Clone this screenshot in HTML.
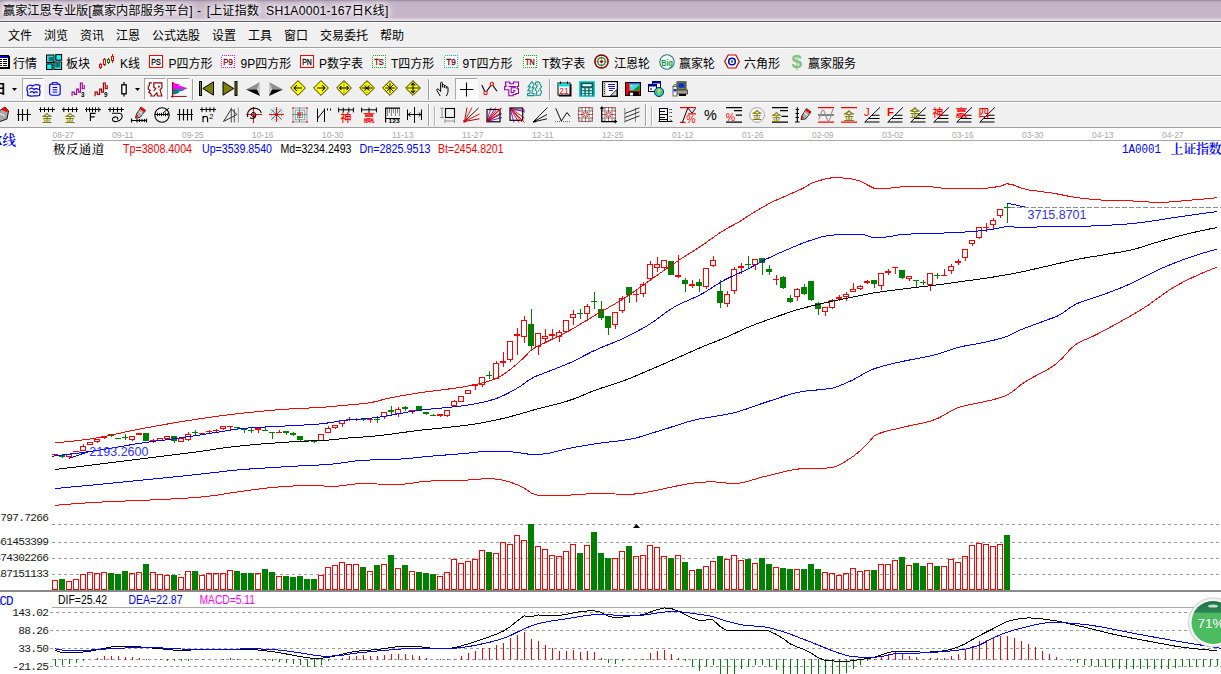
<!DOCTYPE html>
<html lang="zh-CN"><head><meta charset="utf-8"><title>赢家江恩专业版</title>
<style>
html,body{margin:0;padding:0}
body{width:1221px;height:674px;overflow:hidden;position:relative;background:#fff;
 font:12px/14px "Liberation Sans","Noto Sans CJK SC",sans-serif;color:#000}
.abs{position:absolute}
#title{left:0;top:0;width:1221px;height:21px;
 background:linear-gradient(to bottom,#8f8093 0,#b3a3b7 1px,#c4b3c7 3px,#c7b6ca 10px,#c6b5c9 17px,#d8cddb 19px,#efeaf0 21px)}
#title span{position:absolute;left:3px;top:3px;height:16px;line-height:16px;white-space:pre;font-size:12.2px;
 text-shadow:0 0 5px #fff,0 0 7px #fff,0 0 9px #fff,0 0 12px #f4eef5}
#tline{left:0;top:21px;width:1221px;height:1px;background:#5e5963}
#menu{left:0;top:22px;width:1221px;height:25px;background:#f0f0f0;border-top:1px solid #fff;box-sizing:border-box}
#menu span{position:absolute;top:6px;line-height:14px;white-space:nowrap}
.tb{left:0;width:1221px;background:#f0f0f0}
.sep{left:0;width:1221px;height:1px;background:#a0a0a0}
.sepw{left:0;width:1221px;height:1px;background:#fff}
.t1{position:absolute;top:56.5px;line-height:14px;white-space:nowrap}
.vs{position:absolute;width:1px;background:#a0a0a0;border-right:1px solid #fff}
.pressed{position:absolute;background:#fafafa;border:1px solid #a8a8a8;border-right-color:#fff;border-bottom-color:#fff;box-sizing:border-box}
svg{position:absolute;overflow:visible}
text{white-space:pre}
</style></head><body>

<div id="title" class="abs"><span>赢家江恩专业版[赢家内部服务平台]<i style="font-style:normal;letter-spacing:1.1px"> - </i>[上证指数<i style="font-style:normal;letter-spacing:0.2px">  SH1A0001-167日K线]</i></span></div>
<div id="tline" class="abs"></div>
<div id="menu" class="abs">
<span style="left:8px">文件</span>
<span style="left:44px">浏览</span>
<span style="left:80px">资讯</span>
<span style="left:116px">江恩</span>
<span style="left:152px">公式选股</span>
<span style="left:212px">设置</span>
<span style="left:248px">工具</span>
<span style="left:284px">窗口</span>
<span style="left:320px">交易委托</span>
<span style="left:380px">帮助</span>
</div>
<div class="abs sep" style="top:47px"></div><div class="abs sepw" style="top:48px"></div>
<div class="abs tb" style="top:49px;height:26px"></div>
<div class="abs sep" style="top:75px"></div><div class="abs sepw" style="top:76px"></div>
<div class="abs tb" style="top:77px;height:25px"></div>
<div class="abs sep" style="top:101px"></div><div class="abs sepw" style="top:102px"></div>
<div class="abs tb" style="top:103px;height:24px"></div>
<div class="abs sep" style="top:127px"></div>
<span class="t1" style="left:13px">行情</span>
<span class="t1" style="left:66px">板块</span>
<span class="t1" style="left:120px">K线</span>
<span class="t1" style="left:168.5px">P四方形</span>
<span class="t1" style="left:240.5px">9P四方形</span>
<span class="t1" style="left:319px">P数字表</span>
<span class="t1" style="left:391px">T四方形</span>
<span class="t1" style="left:462.5px">9T四方形</span>
<span class="t1" style="left:542px">T数字表</span>
<span class="t1" style="left:614px">江恩轮</span>
<span class="t1" style="left:679px">赢家轮</span>
<span class="t1" style="left:744px">六角形</span>
<span class="t1" style="left:808px">赢家服务</span>
<svg style="left:-7px;top:55px" width="17" height="14" viewBox="0 0 17 14" shape-rendering="crispEdges"><rect x="0.5" y="0.5" width="15" height="12" fill="#fff" stroke="#000"/><rect x="1" y="1" width="14" height="2" fill="#0000c0"/><path d="M2 4.5H14M2 6.5H14M2 8.5H14M2 10.5H14" stroke="#000" fill="none"/><path d="M5.5 4V11M9.5 4V11" stroke="#fff" fill="none"/><rect x="16" y="1" width="1" height="13" fill="#000"/><rect x="1" y="13" width="16" height="1" fill="#000"/></svg>
<svg style="left:46px;top:54px" width="16" height="16" viewBox="0 0 16 16"><rect x="0.5" y="1" width="7.5" height="7.5" fill="#30d8d8" stroke="#000"/><rect x="2.7" y="3" width="4.6" height="4.3" fill="#007878"/><rect x="9.8" y="0.6" width="5.8" height="5.6" fill="#00ffff" stroke="#000" stroke-width="1.1"/><rect x="0.6" y="9.9" width="5.6" height="5.6" fill="#00ffff" stroke="#000" stroke-width="1.1"/><rect x="7.9" y="8" width="7.7" height="7.5" fill="#30d8d8" stroke="#000"/><rect x="9.2" y="8.9" width="4.8" height="4.4" fill="#007878"/></svg>
<svg style="left:98px;top:53px" width="17" height="17" viewBox="0 0 17 17" shape-rendering="crispEdges"><g fill="#fff" stroke="#ff0000"><path d="M2.5 10V16M6.5 5V13M14.5 1V10" /><rect x="1.5" y="11.5" width="2" height="3"/><rect x="5.5" y="6.5" width="2" height="5"/><rect x="13.5" y="3.5" width="2" height="4"/></g><g fill="#fff" stroke="#008000"><path d="M10.5 5V11"/><rect x="9.5" y="6.5" width="2" height="3"/></g></svg>
<svg style="left:149px;top:55px" width="14" height="13" viewBox="0 0 14 13"><rect x="0.5" y="0.5" width="13" height="12" fill="#fff" stroke="#ff0000" shape-rendering="crispEdges"/><text x="7" y="10" text-anchor="middle" font-size="8.3" font-family="Liberation Sans, sans-serif" fill="#000" stroke="#000" stroke-width="0.3" textLength="9.6" lengthAdjust="spacingAndGlyphs">PS</text></svg>
<svg style="left:221px;top:55px" width="14" height="13" viewBox="0 0 14 13"><rect x="0.5" y="0.5" width="13" height="12" fill="#fff" stroke="#ff00ff" stroke-dasharray="1 1" shape-rendering="crispEdges"/><text x="7" y="10" text-anchor="middle" font-size="8.3" font-family="Liberation Sans, sans-serif" fill="#800000" stroke="#800000" stroke-width="0.3" textLength="9.6" lengthAdjust="spacingAndGlyphs">P9</text></svg>
<svg style="left:300px;top:55px" width="14" height="13" viewBox="0 0 14 13"><rect x="0.5" y="0.5" width="13" height="12" fill="#fff" stroke="#ff0000" shape-rendering="crispEdges"/><text x="7" y="10" text-anchor="middle" font-size="8.3" font-family="Liberation Sans, sans-serif" fill="#000" stroke="#000" stroke-width="0.3" textLength="9.6" lengthAdjust="spacingAndGlyphs">PN</text></svg>
<svg style="left:372px;top:55px" width="14" height="13" viewBox="0 0 14 13"><rect x="0.5" y="0.5" width="13" height="12" fill="#fff" stroke="#00c000" stroke-dasharray="1 1" shape-rendering="crispEdges"/><text x="7" y="10" text-anchor="middle" font-size="8.3" font-family="Liberation Sans, sans-serif" fill="#800000" stroke="#800000" stroke-width="0.3" textLength="9.6" lengthAdjust="spacingAndGlyphs">TS</text></svg>
<svg style="left:443.5px;top:55px" width="14" height="13" viewBox="0 0 14 13"><rect x="0.5" y="0.5" width="13" height="12" fill="#fff" stroke="#00c8c8" stroke-dasharray="1 1" shape-rendering="crispEdges"/><text x="7" y="10" text-anchor="middle" font-size="8.3" font-family="Liberation Sans, sans-serif" fill="#800000" stroke="#800000" stroke-width="0.3" textLength="9.6" lengthAdjust="spacingAndGlyphs">T9</text></svg>
<svg style="left:523px;top:55px" width="14" height="13" viewBox="0 0 14 13"><rect x="0.5" y="0.5" width="13" height="12" fill="#fff" stroke="#00c000" stroke-dasharray="1 1" shape-rendering="crispEdges"/><text x="7" y="10" text-anchor="middle" font-size="8.3" font-family="Liberation Sans, sans-serif" fill="#800000" stroke="#800000" stroke-width="0.3" textLength="9.6" lengthAdjust="spacingAndGlyphs">TN</text></svg>
<svg style="left:594px;top:54px" width="15" height="15" viewBox="0 0 15 15"><circle cx="7.5" cy="7.5" r="6.6" fill="#f0f0f0" stroke="#800000" stroke-width="1.5"/><circle cx="7.5" cy="7.5" r="3.8" fill="#fff" stroke="#2f8f2f" stroke-width="1.4"/><circle cx="7.5" cy="7.5" r="1.5" fill="#c00000"/><path d="M7.5 0V15M0 7.5H15" stroke="#800000" stroke-width="0.5" opacity="0.6"/></svg>
<svg style="left:659px;top:54px" width="16" height="16" viewBox="0 0 16 16"><circle cx="8" cy="8" r="7.2" fill="#f4f8f8" stroke="#2a7a8a" stroke-width="1.1"/><text x="8" y="11.5" text-anchor="middle" font-size="9.5" font-weight="bold" font-family="Liberation Sans, sans-serif" fill="#0a9a40" textLength="11.5" lengthAdjust="spacingAndGlyphs">Big</text></svg>
<svg style="left:724px;top:54px" width="16" height="15" viewBox="0 0 16 15"><path d="M0.7 7.5L4.2 1H11.8L15.3 7.5L11.8 14H4.2Z" fill="#fff" stroke="#c00000" stroke-width="1.2"/><circle cx="8" cy="7.5" r="3.3" fill="#fff" stroke="#0000c0" stroke-width="1.5"/><circle cx="8" cy="7.5" r="1.3" fill="#00a000"/></svg>
<span style="position:absolute;left:791.5px;top:51px;font:bold 19px/22px 'Liberation Sans',sans-serif;color:#7cc47e">$</span>
<span style="position:absolute;left:-7px;top:81px;font:bold 13px/16px 'Liberation Sans','Noto Sans CJK SC',sans-serif;color:#000">日</span>
<svg style="left:12px;top:88px" width="5" height="3" viewBox="0 0 5 3"><path d="M0 0H5L2.5 3Z" fill="#000"/></svg>
<div class="pressed" style="left:21.5px;top:78px;width:22px;height:22px"></div>
<div class="pressed" style="left:144px;top:78px;width:22px;height:22px"></div>
<div class="pressed" style="left:167px;top:78px;width:23px;height:22px"></div>
<div class="pressed" style="left:455px;top:78px;width:22.5px;height:22px"></div>
<svg style="left:25.5px;top:82.5px" width="15" height="14" viewBox="0 0 15 14"><path d="M1 4.5C2 1.5 5 2 6.5 3C9 1 12 1.5 14 2.5L13.5 6C14.5 8 14 10.5 13.5 12.5C11 13.5 8.5 12.5 7 13C5 13.5 3 13 1.5 12C2.5 10 1.5 8.5 1 7Z M3 6.5C4.5 4.5 7 5 8 6.5C9.5 5 11.5 5.5 12.5 7 M4 9.5C5.5 8 7 8.5 8 10C9 8.5 10.5 8.5 11.5 10" fill="none" stroke="#0000ff" stroke-width="1.2"/></svg>
<svg style="left:48.5px;top:81.5px" width="12" height="14" viewBox="0 0 12 14"><rect x="0.6" y="1.8" width="10.6" height="11.4" rx="2.2" fill="none" stroke="#0000ff" stroke-width="1.15"/><rect x="3.6" y="0.5" width="4.6" height="1.8" fill="#f0f0f0" stroke="#0000ff" stroke-width="0.9"/><path d="M3.6 5.5H8.2M3.6 7.8H8.2M3.6 10.1H8.2" stroke="#0000ff" stroke-width="1"/></svg>
<svg style="left:70.5px;top:81.5px" width="15" height="15" viewBox="0 0 15 15"><path d="M1.1 14.2V10.1H3.4V12.4H5.65V7.1H7.5V10.1H9.4V1H11.3V6.7H13.2V3" fill="none" stroke="#a000a0" stroke-width="1.15"/><text x="10" y="15" font-size="6.3" font-weight="bold" font-family="Liberation Sans, sans-serif" fill="#000">3</text></svg>
<svg style="left:94px;top:81.5px" width="15" height="15" viewBox="0 0 15 15"><path d="M1.1 14.2V10.1H3.4V12.4H5.65V7.1H7.5V10.1H9.4V1H11.3V6.7H13.2V3" fill="none" stroke="#a00000" stroke-width="1.15"/><text x="10" y="15" font-size="6.3" font-weight="bold" font-family="Liberation Sans, sans-serif" fill="#000">9</text></svg>
<svg style="left:120.5px;top:81.5px" width="6" height="15" viewBox="0 0 6 15"><path d="M3 0V14.5" stroke="#000" stroke-width="1.2"/><rect x="0.8" y="2.8" width="4.4" height="9" fill="#fff" stroke="#000" stroke-width="1.3"/></svg>
<svg style="left:135px;top:88px" width="5" height="3" viewBox="0 0 5 3"><path d="M0 0H5L2.5 3Z" fill="#000"/></svg>
<svg style="left:148px;top:82px" width="15" height="15" viewBox="0 0 15 15"><path d="M3.9 0.9H1.4V3.4L0.3 4.6V7.2L2.3 8.4L0.8 10.3L3 11.8V14H6.4L7 12.8L8.9 10.9L9.5 14H13.9L12 7.8L13.9 5.9V0.9H5.8V5.3L7.7 6.5L5.8 9" fill="none" stroke="#900000" stroke-width="1.15"/><rect x="10" y="3.8" width="1.7" height="1.7" fill="#900000"/></svg>
<svg style="left:171px;top:81px" width="16" height="17" viewBox="0 0 16 17"><path d="M2.1 1.1L3.6 2.3L8.9 3.4L7.4 4.5L12.7 6L15.7 7V7.9H2.1Z" fill="#ff00ff"/><path d="M2.1 7.9L14.2 8.3L12.7 9.4L8.2 10.6L7.4 12.1L4.4 13.2L2.1 13.6Z" fill="#008080"/><rect x="1" y="1" width="1.15" height="15.6" fill="#b00000"/><rect x="0" y="14.9" width="15.7" height="1" fill="#b00000"/></svg>
<div class="vs" style="left:192px;top:79px;height:21px"></div>
<svg style="left:199px;top:81px" width="16" height="15" viewBox="0 0 16 15"><rect x="0.5" y="0.5" width="2" height="14" fill="#808000" stroke="#000"/><path d="M14.5 0.8V14.2L3.8 7.5Z" fill="#808000" stroke="#000" stroke-width="1"/></svg>
<svg style="left:221.5px;top:81px" width="16" height="15" viewBox="0 0 16 15"><rect x="13" y="0.5" width="2" height="14" fill="#808000" stroke="#000"/><path d="M1 0.8V14.2L11.7 7.5Z" fill="#808000" stroke="#000" stroke-width="1"/></svg>
<svg style="left:246px;top:81.5px" width="15" height="15" viewBox="0 0 15 15"><path d="M14 0L0 7.5L11 7.5Z" fill="#909090"/><path d="M14 0L11 7.5L14 14Z" fill="#c8c8c8"/><path d="M0 7.5L14 14L11 7.5Z" fill="#000"/></svg>
<svg style="left:269px;top:81.5px" width="15" height="15" viewBox="0 0 15 15"><path d="M0 0L14 7.5L3 7.5Z" fill="#909090"/><path d="M0 0L3 7.5L0 14Z" fill="#c8c8c8"/><path d="M14 7.5L0 14L3 7.5Z" fill="#000"/></svg>
<svg style="left:290.3px;top:80.2px" width="16" height="16" viewBox="0 0 16 16"><path d="M8 0.6L15.4 8L8 15.4L0.6 8Z" fill="#ffff00" stroke="#1c1c00" stroke-width="0.9"/><path d="M4 8H12M7 5L4 8L7 11" stroke="#000" stroke-width="1.05" fill="none"/></svg>
<svg style="left:313.3px;top:80.2px" width="16" height="16" viewBox="0 0 16 16"><path d="M8 0.6L15.4 8L8 15.4L0.6 8Z" fill="#ffff00" stroke="#1c1c00" stroke-width="0.9"/><path d="M4 8H12M9 5L12 8L9 11" stroke="#000" stroke-width="1.05" fill="none"/></svg>
<svg style="left:336.3px;top:80.2px" width="16" height="16" viewBox="0 0 16 16"><path d="M8 0.6L15.4 8L8 15.4L0.6 8Z" fill="#ffff00" stroke="#1c1c00" stroke-width="0.9"/><path d="M3.5 8H12.5M5.5 6L3.5 8L5.5 10M10.5 6L12.5 8L10.5 10" stroke="#000" stroke-width="1.05" fill="none"/><path d="M8 2V14" stroke="#000" stroke-width="0.6" stroke-dasharray="1.5 1"/></svg>
<svg style="left:359.3px;top:80.2px" width="16" height="16" viewBox="0 0 16 16"><path d="M8 0.6L15.4 8L8 15.4L0.6 8Z" fill="#ffff00" stroke="#1c1c00" stroke-width="0.9"/><path d="M2.5 8H13.5M5.5 5.5L8 8L5.5 10.5M10.5 5.5L8 8L10.5 10.5" stroke="#000" stroke-width="1.05" fill="none"/><path d="M8 2V14" stroke="#666600" stroke-width="0.6" stroke-dasharray="1 1.5"/></svg>
<svg style="left:382.3px;top:80.2px" width="16" height="16" viewBox="0 0 16 16"><path d="M8 0.6L15.4 8L8 15.4L0.6 8Z" fill="#ffff00" stroke="#1c1c00" stroke-width="0.9"/><path d="M3 8H13M8 3V13M4.5 4.5L11.5 11.5M11.5 4.5L4.5 11.5" stroke="#000" stroke-width="0.9" fill="none"/></svg>
<svg style="left:405.3px;top:80.2px" width="16" height="16" viewBox="0 0 16 16"><path d="M8 0.6L15.4 8L8 15.4L0.6 8Z" fill="#ffff00" stroke="#1c1c00" stroke-width="0.9"/><path d="M8 3V13M5.8 5.5L8 3L10.2 5.5M5.8 10.5L8 13L10.2 10.5" stroke="#000" stroke-width="1.05" fill="none"/><path d="M2 8H14" stroke="#000" stroke-width="0.8"/></svg>
<div class="vs" style="left:428px;top:79px;height:21px"></div>
<svg style="left:436px;top:81px" width="13" height="16" viewBox="0 0 13 16"><path d="M4.2 15L1 9.6C0.2 8.2 1.6 7.2 2.7 8.4L4.6 10.6V2.2C4.6 0.8 6.4 0.8 6.4 2.2V6.5M6.4 4.3C6.6 3.2 8.2 3.3 8.3 4.5V7M8.3 5.2C8.6 4.2 10.1 4.4 10.2 5.6V7.6M10.2 6.3C10.6 5.5 12 5.7 12 7V10.3C12 12.3 11 13.6 10.3 15" fill="none" stroke="#000" stroke-width="1"/></svg>
<svg style="left:460px;top:82px" width="14" height="15" viewBox="0 0 14 15"><path d="M6.5 0.5V14.5M0 7.5H13.5" stroke="#000" stroke-width="1.1"/></svg>
<svg style="left:480.5px;top:81px" width="17" height="15" viewBox="0 0 17 15"><path d="M0.8 4L4.5 12L10.8 3L16 10.3" fill="none" stroke="#000" stroke-width="1.1"/><circle cx="4.5" cy="12" r="1.7" fill="#fff" stroke="#ff0000" stroke-width="1.1"/><circle cx="10.8" cy="3" r="1.7" fill="#fff" stroke="#ff0000" stroke-width="1.1"/></svg>
<svg style="left:504px;top:81px" width="15" height="15" viewBox="0 0 15 15"><path d="M1.5 1H5.8V2.8H9.5V1H14.5V5.5H13.2V7.8H14.5V12.5H12V13.5H9.2V14.7H4.8V8.8H0.6V5.5H2V4H1.5Z M4.5 5.5H11.3V6.8H7.2V11.5H9.8V9.5H11.5" fill="none" stroke="#9000a8" stroke-width="1.05"/></svg>
<svg style="left:527px;top:81px" width="15" height="15" viewBox="0 0 15 15"><path d="M4.8 0.8L1.2 5.8H3.2L0.8 9.8H3V12.5H0.6V14.6H7V12.5H5.2V9.5L7 6.8H5L7.2 3.2Z M8.5 1.5C10.5 0.3 13.3 1 13 3.2L14.6 5.8L12.8 7.8L14.6 10.8L13.2 14.3H8.8L10 11L8.2 8.5L10.2 5.5L8.6 3.5Z M10.8 3.2V4.2M11.5 9V10.5" fill="none" stroke="#109090" stroke-width="1.05"/></svg>
<div class="vs" style="left:549px;top:79px;height:21px"></div>
<svg style="left:557px;top:81px" width="15" height="16" viewBox="0 0 15 16"><rect x="2" y="3" width="12.5" height="12.5" fill="#000"/><rect x="1" y="2" width="12" height="12" fill="#fff" stroke="#000"/><rect x="1.5" y="2.5" width="11" height="3" fill="#00e0e0"/><path d="M3.5 0.5V3M10.5 0.5V3" stroke="#000"/><text x="7" y="13.4" text-anchor="middle" font-size="9.6" font-family="Liberation Sans, sans-serif" fill="#ff0000" textLength="9.6" lengthAdjust="spacingAndGlyphs">21</text></svg>
<svg style="left:579px;top:81px" width="16" height="16" viewBox="0 0 16 16"><rect x="0.8" y="0.8" width="14.4" height="14.4" fill="#007070" stroke="#00d0d0" stroke-width="1.3"/><rect x="3" y="2.8" width="10" height="3" fill="#e8ffff" stroke="#000" stroke-width="0.6"/><g fill="#f4ffff"><rect x="3" y="7.3" width="2.3" height="1.8"/><rect x="6.8" y="7.3" width="2.3" height="1.8"/><rect x="10.6" y="7.3" width="2.3" height="1.8"/><rect x="3" y="10.3" width="2.3" height="1.8"/><rect x="6.8" y="10.3" width="2.3" height="1.8"/><rect x="10.6" y="10.3" width="2.3" height="1.8"/><rect x="3" y="13" width="2.3" height="1.3"/><rect x="6.8" y="13" width="2.3" height="1.3"/><rect x="10.6" y="13" width="2.3" height="1.3"/></g></svg>
<svg style="left:602px;top:81px" width="16" height="16" viewBox="0 0 16 16"><rect x="0.6" y="0.6" width="14.8" height="14.8" fill="#fff" stroke="#000" stroke-width="1.2"/><rect x="1.2" y="1.2" width="2.4" height="13.6" fill="#c0c0c0"/><path d="M2.4 2V14" stroke="#303030" stroke-width="0.9" stroke-dasharray="1 1"/><path d="M5.5 3.2H12.5M5.5 5.4H12.5M6.5 7.6H12.5M6.5 9.8H11" stroke="#0000e0" stroke-width="0.9" shape-rendering="crispEdges"/><path d="M8.5 14.8L14.8 8.5V14.8Z" fill="#d0d0d0" stroke="#000" stroke-width="0.8"/></svg>
<svg style="left:625px;top:82px" width="16" height="14" viewBox="0 0 16 14"><rect x="0.5" y="0.5" width="15" height="13" fill="#ff0000" stroke="#000"/><rect x="4.5" y="1" width="10" height="7.5" fill="#40d8f0"/><path d="M8 8.5L14.5 3V8.5Z" fill="#00a000"/><rect x="4.5" y="1" width="10" height="1.2" fill="#2060ff"/><circle cx="6.6" cy="3.6" r="0.9" fill="#ffff60"/><rect x="3.5" y="9.5" width="10.5" height="4" fill="#000"/><rect x="5" y="10.7" width="3" height="2.8" fill="#fff"/></svg>
<svg style="left:648px;top:81px" width="16" height="16" viewBox="0 0 16 16"><rect x="4.5" y="0.5" width="8" height="7" fill="#fff" stroke="#000060"/><rect x="4.5" y="0.5" width="8" height="2" fill="#0000a0"/><rect x="0.5" y="3.5" width="8" height="7" fill="#fff" stroke="#000060"/><rect x="0.5" y="3.5" width="8" height="2" fill="#0000a0"/><rect x="2" y="7" width="2" height="2" fill="#808080"/><circle cx="11" cy="11" r="4.6" fill="#20c0d0" stroke="#003040" stroke-width="0.9"/><path d="M9 8.5L12 8L13.5 10L11.5 11.5L12 14L10 13L9.5 10.5Z" fill="#e0d020"/></svg>
<svg style="left:671.5px;top:81px" width="16" height="16" viewBox="0 0 16 16"><rect x="5" y="0.8" width="9" height="8.4" fill="#808040" stroke="#404020"/><rect x="6.5" y="2.2" width="6" height="4.5" fill="#0030e0"/><rect x="4" y="9" width="11.5" height="4" fill="#a0a090" stroke="#303030" stroke-width="0.8"/><rect x="7" y="13" width="7" height="2" fill="#000"/><rect x="1" y="5.5" width="4" height="9.5" fill="#f0f0f0" stroke="#606040" stroke-width="0.9"/><rect x="1.5" y="8" width="3" height="2.5" fill="#0030e0"/><path d="M0.8 5.5L3 3.2L5 5.5" fill="none" stroke="#404020" stroke-width="0.9"/></svg>
<svg style="left:-2px;top:107px" width="12" height="15" viewBox="0 0 12 15"><path d="M7 0L10.5 4L9 12L2 14.5L-2 12V6Z" fill="#a8a8a8" stroke="#000" stroke-width="0.9"/><path d="M3 2.5L7 0L10.5 4L8.5 5Z" fill="#ff0000"/><path d="M1 6L7 9" stroke="#fff" stroke-width="0.9"/></svg>
<svg style="left:17px;top:107px" width="14" height="15" viewBox="0 0 14 15"><path d="M1.5 2V14M5.5 2V14M10.5 2V14M0 7.5H13.8" stroke="#000" stroke-width="1.15" fill="none"/></svg>
<svg style="left:39px;top:107px" width="16" height="16" viewBox="0 0 16 16"><path d="M0 2.5H16M1.5 0.2999999999999998V5.1M5.5 0.2999999999999998V5.1M9.5 0.2999999999999998V5.1M13.5 0.2999999999999998V5.1" stroke="#000" stroke-width="1" fill="none"/><text x="2.8" y="14.6" font-size="10.5" font-family="Liberation Sans, Noto Sans CJK SC, sans-serif" fill="#808000" font-weight="500">金</text></svg>
<svg style="left:62px;top:107px" width="16" height="16" viewBox="0 0 16 16"><path d="M0 2.5H16M1.8 0.2999999999999998V5.1M6.5 0.2999999999999998V5.1M10.5 0.2999999999999998V5.1M14.5 0.2999999999999998V5.1" stroke="#000" stroke-width="1" fill="none"/><text x="2.8" y="14.6" font-size="10.5" font-family="Liberation Sans, Noto Sans CJK SC, sans-serif" fill="#808000" font-weight="500">金</text></svg>
<svg style="left:85px;top:107px" width="16" height="16" viewBox="0 0 16 16"><path d="M0 2.5H16M1.5 0.2999999999999998V5.1M4.5 0.2999999999999998V5.1M7.5 0.2999999999999998V5.1M10.5 0.2999999999999998V5.1M13.8 0.2999999999999998V5.1" stroke="#000" stroke-width="1" fill="none"/><path d="M5.4 14V6.3H10.6M5.4 9.8H9.6" stroke="#000" stroke-width="1.15" fill="none"/></svg>
<svg style="left:108px;top:107px" width="16" height="16" viewBox="0 0 16 16"><path d="M0 2.5H16M2 0.2999999999999998V5.1M5.5 0.2999999999999998V5.1M9.5 0.2999999999999998V5.1M13.5 0.2999999999999998V5.1" stroke="#000" stroke-width="1" fill="none"/><path d="M4 6.3H11C14 6.3 15 9 13.5 11.5C11.5 15 5.5 15.5 4.5 13C3.8 11 6.5 9.5 8.5 10C10 10.3 10.3 12 9 12.3" stroke="#000" stroke-width="1.1" fill="none"/></svg>
<svg style="left:131px;top:107px" width="16" height="16" viewBox="0 0 16 16"><g transform="translate(4.5 0)"><path d="M5.5 0L10 3.5L4.5 10.5L0 11L1 7Z" fill="#b0b0b0" stroke="#000" stroke-width="0.8"/><path d="M5.5 0L10 3.5L8.6 5.2L4.2 1.7Z" fill="#ff0000"/><path d="M0 11L1 7L2.8 8.8Z" fill="#ff0000"/><path d="M3 4L7 7.5" stroke="#fff" stroke-width="0.8"/></g><path d="M0 13.5H16M0.5 11.5V15.5M6 11.5V15.5M8.5 12V15M11 12V15M13.5 12V15M15.5 11.5V15.5" stroke="#000" stroke-width="1.1" fill="none"/></svg>
<svg style="left:154px;top:107px" width="16" height="16" viewBox="0 0 16 16"><circle cx="8" cy="8" r="7.2" fill="none" stroke="#000" stroke-width="1.1"/><path d="M0.8 7.5H15.2M3.5 5.8V9.2M5.5 6.3V8.7M7.5 5.8V9.2M9.5 6.3V8.7M11.5 5.8V9.2M13.5 6.3V8.7" stroke="#000" stroke-width="1" fill="none"/><path d="M9 6L15 1" stroke="#000" stroke-width="1"/></svg>
<svg style="left:177px;top:107px" width="16" height="15" viewBox="0 0 16 15"><path d="M2.5 2V13.5M6.5 2V13.5M10.5 2V13.5M14.5 2V13.5M0 7.5H16" stroke="#000" stroke-width="1.15" fill="none"/></svg>
<svg style="left:200px;top:107px" width="16" height="16" viewBox="0 0 16 16"><path d="M0 2.5H16M2 0.2999999999999998V5.1M6.3 0.2999999999999998V5.1M10 0.2999999999999998V5.1M13.8 0.2999999999999998V5.1" stroke="#000" stroke-width="1" fill="none"/><path d="M3 15.3V9M3 11C4 8.8 7.6 8.6 7.6 11.3V15.3" stroke="#000" stroke-width="1.15" fill="none"/><text x="9.3" y="12" font-size="7.5" font-family="Liberation Sans, sans-serif" fill="#000">2</text></svg>
<svg style="left:223px;top:107px" width="16" height="16" viewBox="0 0 16 16"><path d="M0.5 14.5L8.3 2L13.8 7.5Z" fill="none" stroke="#303030" stroke-width="1"/><path d="M8.3 0.5V15.5M11.3 2V15.5" stroke="#404040" stroke-width="0.9"/><path d="M15.3 0.5V15.5" stroke="#909090" stroke-width="1"/></svg>
<svg style="left:245.5px;top:107px" width="16" height="16" viewBox="0 0 16 16"><path d="M7.5 0V16M0 7.5H16" stroke="#ff0000" stroke-width="1"/><circle cx="7.5" cy="7.5" r="2.1" fill="none" stroke="#000" stroke-width="1"/><path d="M1.8 10C0.3 4.5 4.5 0.8 9 1.2C12.3 1.6 14.6 3.8 15.2 5.8M9.8 7.8C10.1 11 6.6 12.3 3.9 10.8" fill="none" stroke="#000" stroke-width="1.1"/></svg>
<svg style="left:268.5px;top:107px" width="16" height="16" viewBox="0 0 16 16"><circle cx="7.5" cy="7.5" r="5.3" fill="none" stroke="#9ab" stroke-width="0.7"/><circle cx="7.5" cy="7.5" r="3" fill="none" stroke="#9ab" stroke-width="0.7"/><path d="M2.2 2.2L12.8 12.8M12.8 2.2L2.2 12.8" stroke="#109090" stroke-width="1"/><path d="M7.5 0V15M0 7.5H15" stroke="#ff0000" stroke-width="1"/><circle cx="7.5" cy="7.5" r="1.6" fill="#e00000"/><circle cx="7.5" cy="7.5" r="7" fill="none" stroke="#9ab" stroke-width="0.6" stroke-dasharray="1 1"/></svg>
<svg style="left:291.5px;top:107px" width="16" height="16" viewBox="0 0 16 16"><g fill="none" stroke="#888" stroke-width="0.8"><rect x="1" y="1" width="14" height="14"/><rect x="3.2" y="3.2" width="9.6" height="9.6"/><rect x="5.4" y="5.4" width="5.2" height="5.2"/></g><path d="M7.5 0.5V15.5M0.5 7.5H15.5" stroke="#109090" stroke-width="1" stroke-dasharray="2 1"/><circle cx="7.5" cy="7.5" r="2" fill="#e04040"/><g fill="#ff0000"><rect x="0.3" y="0.3" width="1.4" height="1.4"/><rect x="14.3" y="0.3" width="1.4" height="1.4"/><rect x="0.3" y="14.3" width="1.4" height="1.4"/><rect x="14.3" y="14.3" width="1.4" height="1.4"/></g></svg>
<svg style="left:315.5px;top:107px" width="16" height="16" viewBox="0 0 16 16"><path d="M1.5 1.5V15M1.5 11.5L8.5 2.8M8.5 1.5V15M11.5 1.5V3.5M14.5 1.5V3.5" stroke="#000" stroke-width="1" fill="none"/></svg>
<svg style="left:338px;top:107px" width="16" height="16" viewBox="0 0 16 16"><path d="M0 2.8H16M0.6 0.5999999999999996V5.4M5.3 0.5999999999999996V5.4M10.8 0.5999999999999996V5.4M15.4 0.5999999999999996V5.4" stroke="#000" stroke-width="1" fill="none"/><text x="2.5" y="15.4" font-size="11" font-family="Liberation Sans, Noto Sans CJK SC, sans-serif" fill="#ff0000" font-weight="500">神</text></svg>
<svg style="left:361px;top:107px" width="16" height="16" viewBox="0 0 16 16"><path d="M0 2.8H16M0.6 0.5999999999999996V5.4M8 0.5999999999999996V5.4M15.4 0.5999999999999996V5.4" stroke="#000" stroke-width="1" fill="none"/><text x="2.2" y="15.4" font-size="11.5" font-family="Liberation Sans, Noto Sans CJK SC, sans-serif" fill="#ff0000" font-weight="500">赢</text></svg>
<svg style="left:384.5px;top:107px" width="16" height="16" viewBox="0 0 16 16"><path d="M0.6 1V15.5M0 1.2H15M0 11.5H15" stroke="#000" stroke-width="1.2" fill="none"/><path d="M2.5 1.5V9M4.5 1.5V6M6.5 1.5V9M8.5 1.5V6M10.5 1.5V9M12.5 1.5V6M14.4 1.5V9" stroke="#000" stroke-width="0.9" stroke-dasharray="1 1"/><text x="3.6" y="15.8" font-size="5.5" font-weight="bold" font-family="Liberation Sans, sans-serif" fill="#000" textLength="11" lengthAdjust="spacingAndGlyphs">123</text></svg>
<svg style="left:407px;top:107px" width="16" height="16" viewBox="0 0 16 16"><path d="M0.5 2.5V13M14.5 2.5V13M7.5 0V16M1 7.5H14.2M3.5 5.5L1.2 7.5L3.5 9.5M11.7 5.5L14 7.5L11.7 9.5" stroke="#000" stroke-width="1" fill="none"/></svg>
<div class="vs" style="left:428px;top:104px;height:22px"></div>
<div class="vs" style="left:434px;top:106px;height:20px;background:#b0b0b0"></div>
<svg style="left:440px;top:107px" width="16" height="16" viewBox="0 0 16 16"><rect x="5.5" y="1.5" width="9" height="9" fill="none" stroke="#000" stroke-width="1.1"/><path d="M0 1.2H4M0 10.5H4M2 1.2V10.5M5 12V16M14.5 12V16M5 14H14.5" stroke="#888" stroke-width="0.9" fill="none"/></svg>
<svg style="left:463px;top:107px" width="17" height="16" viewBox="0 0 17 16"><path d="M1.5 14.5L15.5 1" stroke="#000" stroke-width="0.9"/><path d="M1.5 14.5L4 0.5M1.5 14.5L16.5 11.8" stroke="#a00000" stroke-width="0.95"/><path d="M1.5 14.5L9 0.5M1.5 14.5L16.5 7" stroke="#ff0000" stroke-width="0.95"/><rect x="0.3" y="13" width="2.5" height="2.5" fill="#e00000"/></svg>
<svg style="left:486px;top:107px" width="17" height="16" viewBox="0 0 17 16"><path d="M1 14.5L5 0.5M1 14.5L9.5 0.5M1 14.5L16 6.5M1 14.5L16 10.5" stroke="#9000a8" stroke-width="0.9"/><rect x="1" y="2.5" width="13" height="12.3" fill="none" stroke="#000" stroke-width="1.15"/><path d="M1 14.5L15.5 0.8" stroke="#ff0000" stroke-width="1.1"/><path d="M1 14.5L11 2M1 14.5L14.5 6" stroke="#a00000" stroke-width="0.8"/></svg>
<svg style="left:509px;top:107px" width="17" height="16" viewBox="0 0 17 16"><path d="M1 1L5 15.5M1 1L16 5M4 3H16M1 1L10 15.5" stroke="#9000a8" stroke-width="0.9"/><rect x="1" y="1" width="12.7" height="12.3" fill="none" stroke="#000" stroke-width="1.15"/><path d="M1 1L15.5 15.5M1 1L13 15" stroke="#ff0000" stroke-width="0.95"/><path d="M1 1L15.5 11" stroke="#a00000" stroke-width="0.8"/></svg>
<svg style="left:532px;top:107px" width="16" height="16" viewBox="0 0 16 16"><path d="M1 15L15.5 0.5M1 15L15 7.5M1 15L15 11.8" stroke="#000" stroke-width="0.9" fill="none"/><path d="M0.5 15.3L4.5 12.5L4 15.3Z" fill="#000"/></svg>
<svg style="left:554.5px;top:107px" width="16" height="16" viewBox="0 0 16 16"><path d="M0.7 1.2L6.3 14L12 5.5L15 9.5" stroke="#000" stroke-width="0.95" fill="none"/><path d="M0 14.6H16" stroke="#555" stroke-width="0.9" stroke-dasharray="1 1"/></svg>
<svg style="left:578px;top:107px" width="16" height="16" viewBox="0 0 16 16"><rect x="0.5" y="0.5" width="14" height="14" fill="#fff" stroke="#8a8a8a" stroke-width="1"/><path d="M4 0.5V14.5M7.5 0.5V14.5M11 0.5V14.5M0.5 4H14.5M0.5 7.5H14.5M0.5 11H14.5" stroke="#8a8a8a" stroke-width="1"/><g fill="#ff0000"><rect x="3.4" y="0.0" width="1.2" height="1.2"/><rect x="6.9" y="0.0" width="1.2" height="1.2"/><rect x="10.4" y="0.0" width="1.2" height="1.2"/><rect x="3.4" y="13.8" width="1.2" height="1.2"/><rect x="6.9" y="13.8" width="1.2" height="1.2"/><rect x="10.4" y="13.8" width="1.2" height="1.2"/><rect x="0.0" y="3.4" width="1.2" height="1.2"/><rect x="0.0" y="6.9" width="1.2" height="1.2"/><rect x="0.0" y="10.4" width="1.2" height="1.2"/><rect x="13.8" y="3.4" width="1.2" height="1.2"/><rect x="13.8" y="6.9" width="1.2" height="1.2"/><rect x="13.8" y="10.4" width="1.2" height="1.2"/><rect x="3.4" y="6.9" width="1.2" height="1.2"/><rect x="10.4" y="6.9" width="1.2" height="1.2"/><rect x="6.9" y="3.4" width="1.2" height="1.2"/><rect x="6.9" y="10.4" width="1.2" height="1.2"/><rect x="5.1000000000000005" y="5.1000000000000005" width="1.2" height="1.2"/><rect x="8.700000000000001" y="5.1000000000000005" width="1.2" height="1.2"/><rect x="5.1000000000000005" y="8.700000000000001" width="1.2" height="1.2"/><rect x="8.700000000000001" y="8.700000000000001" width="1.2" height="1.2"/></g><circle cx="7.5" cy="7.5" r="1.5" fill="#fff" stroke="#c04040" stroke-width="0.8"/><circle cx="2.3" cy="2.3" r="1.2" fill="#fff" stroke="#777" stroke-width="0.6"/><circle cx="12.7" cy="2.3" r="1.2" fill="#fff" stroke="#777" stroke-width="0.6"/><circle cx="2.3" cy="12.7" r="1.2" fill="#fff" stroke="#777" stroke-width="0.6"/><circle cx="12.7" cy="12.7" r="1.2" fill="#fff" stroke="#777" stroke-width="0.6"/></svg>
<svg style="left:601px;top:107px" width="16" height="16" viewBox="0 0 16 16"><rect x="0.5" y="0.5" width="14" height="14" fill="#fff" stroke="#8a8a8a" stroke-width="1"/><path d="M4 0.5V14.5M7.5 0.5V14.5M11 0.5V14.5M0.5 4H14.5M0.5 7.5H14.5M0.5 11H14.5" stroke="#8a8a8a" stroke-width="1"/><g fill="#ff0000"><rect x="3.4" y="0.0" width="1.2" height="1.2"/><rect x="6.9" y="0.0" width="1.2" height="1.2"/><rect x="10.4" y="0.0" width="1.2" height="1.2"/><rect x="3.4" y="13.8" width="1.2" height="1.2"/><rect x="6.9" y="13.8" width="1.2" height="1.2"/><rect x="10.4" y="13.8" width="1.2" height="1.2"/><rect x="0.0" y="3.4" width="1.2" height="1.2"/><rect x="0.0" y="6.9" width="1.2" height="1.2"/><rect x="0.0" y="10.4" width="1.2" height="1.2"/><rect x="13.8" y="3.4" width="1.2" height="1.2"/><rect x="13.8" y="6.9" width="1.2" height="1.2"/><rect x="13.8" y="10.4" width="1.2" height="1.2"/><rect x="3.4" y="6.9" width="1.2" height="1.2"/><rect x="10.4" y="6.9" width="1.2" height="1.2"/><rect x="6.9" y="3.4" width="1.2" height="1.2"/><rect x="6.9" y="10.4" width="1.2" height="1.2"/><rect x="5.1000000000000005" y="5.1000000000000005" width="1.2" height="1.2"/><rect x="8.700000000000001" y="5.1000000000000005" width="1.2" height="1.2"/><rect x="5.1000000000000005" y="8.700000000000001" width="1.2" height="1.2"/><rect x="8.700000000000001" y="8.700000000000001" width="1.2" height="1.2"/></g><circle cx="7.5" cy="7.5" r="1.5" fill="#fff" stroke="#c04040" stroke-width="0.8"/><circle cx="2.3" cy="2.3" r="1.2" fill="#fff" stroke="#777" stroke-width="0.6"/><circle cx="12.7" cy="2.3" r="1.2" fill="#fff" stroke="#777" stroke-width="0.6"/><circle cx="2.3" cy="12.7" r="1.2" fill="#fff" stroke="#777" stroke-width="0.6"/><circle cx="12.7" cy="12.7" r="1.2" fill="#fff" stroke="#777" stroke-width="0.6"/><path d="M0.8 0V14.6H15.5M-0.6 1.8L0.8 0L2.2 1.8M13.7 13.2L15.5 14.6L13.7 16" stroke="#000" stroke-width="1.1" fill="none"/></svg>
<svg style="left:624px;top:107px" width="16" height="16" viewBox="0 0 16 16"><path d="M0.8 1V15.5M11.5 0.5V15" stroke="#888" stroke-width="1"/><path d="M0.8 6.5L15.5 0.8M0.8 10.5L15.5 4.8M0.8 14.5L15.5 8.8" stroke="#303030" stroke-width="1"/></svg>
<div class="vs" style="left:645px;top:104px;height:22px"></div>
<div class="vs" style="left:651px;top:106px;height:20px;background:#b0b0b0"></div>
<svg style="left:657.5px;top:107px" width="16" height="16" viewBox="0 0 16 16"><path d="M1.5 1V15M9.5 1V15M0.5 14.5H14.5M1.5 1.5H9.5M1.5 4.5H7M1.5 7.5H9.5M1.5 10.5H7M1.5 12.5H9.5" stroke="#000" stroke-width="1" fill="none"/><path d="M11.5 2.5H14M11.5 5.5H14M11.5 9.5H14M12 12.5L14.5 14.5" stroke="#000" stroke-width="0.9" stroke-dasharray="1 0.7"/></svg>
<svg style="left:680px;top:107px" width="16" height="16" viewBox="0 0 16 16"><path d="M0 0.6H16M8 6.8H16M0 15.4H5.5" stroke="#ff0000" stroke-width="1.2"/><path d="M2.5 15L7.8 1L12 6L15.5 1.5" stroke="#000" stroke-width="1" fill="none"/><text x="6.3" y="15.6" font-size="10.5" font-family="Liberation Sans, sans-serif" fill="#ff0000">%</text></svg>
<span style="position:absolute;left:704px;top:105.5px;font:15.5px/18px 'Liberation Sans',sans-serif;color:#000;transform:scaleX(0.93);transform-origin:0 0">%</span>
<svg style="left:726px;top:107px" width="16" height="16" viewBox="0 0 16 16"><path d="M0 0.7H16M8 3.6H16M9.8 8.2H16M0 15.2H16" stroke="#000" stroke-width="1.2"/><text x="-0.3" y="13.6" font-size="10.5" font-family="Liberation Sans, sans-serif" fill="#ff0000">%</text></svg>
<svg style="left:749px;top:107px" width="16" height="16" viewBox="0 0 16 16"><circle cx="8" cy="8" r="7.4" fill="#f8f8f8" stroke="#a8a8a8" stroke-width="1"/><text x="3" y="12" font-size="10" font-family="Liberation Sans, Noto Sans CJK SC, sans-serif" fill="#808000" font-weight="500">金</text></svg>
<svg style="left:772px;top:107px" width="16" height="16" viewBox="0 0 16 16"><path d="M0 0.7H16M8 3.6H16M9.5 9.4H16M0 15.2H16" stroke="#000" stroke-width="1.2"/><text x="-0.5" y="13.8" font-size="10" font-family="Liberation Sans, Noto Sans CJK SC, sans-serif" fill="#808000" font-weight="500">金</text></svg>
<svg style="left:795px;top:107px" width="17" height="16" viewBox="0 0 17 16"><path d="M2.3 0.3V15.5M0.5 2.5H4M0.5 6.5H4M0.5 10.5H4M0 15H4.6" stroke="#000" stroke-width="1.15" fill="none"/><g transform="translate(6 1.5)"><path d="M5.5 0L10 3.5L4.5 10.5L0 11L1 7Z" fill="#b0b0b0" stroke="#000" stroke-width="0.8"/><path d="M5.5 0L10 3.5L8.6 5.2L4.2 1.7Z" fill="#ff0000"/><path d="M0 11L1 7L2.8 8.8Z" fill="#ff0000"/><path d="M3 4L7 7.5" stroke="#fff" stroke-width="0.8"/></g></svg>
<svg style="left:818px;top:107px" width="16" height="16" viewBox="0 0 16 16"><path d="M0 0.7H16M0 15.2H16" stroke="#ff0000" stroke-width="1.3"/><path d="M0 8H16" stroke="#000" stroke-width="0.9"/><path d="M0.5 12C2 12 3 3 5 3C7 3 8.5 14 10.5 14C12.5 14 13.5 3 15.5 2" fill="none" stroke="#909090" stroke-width="1.1"/></svg>
<svg style="left:841px;top:107px" width="16" height="16" viewBox="0 0 16 16"><path d="M0 0.7H16M0 15.2H16" stroke="#ff0000" stroke-width="1.3"/><text x="2.5" y="12.5" font-size="11" font-family="Liberation Sans, Noto Sans CJK SC, sans-serif" fill="#808000" font-weight="500">金</text></svg>
<svg style="left:864px;top:107px" width="16" height="16" viewBox="0 0 16 16"><path d="M0.5 15.3L16 0.3" stroke="#000" stroke-width="0.95"/><path d="M1 15H15.5M4.5 11.5H15.5M8 8.2H15.5" stroke="#000" stroke-width="1.05"/><text x="0" y="8.8" font-size="11.5" font-family="Liberation Sans, sans-serif" fill="#ff0000">J</text></svg>
<svg style="left:887px;top:107px" width="16" height="16" viewBox="0 0 16 16"><path d="M0.5 15.3L16 0.3" stroke="#000" stroke-width="0.95"/><path d="M1 15H15.5M4.5 11.5H15.5M8 8.2H15.5" stroke="#000" stroke-width="1.05"/><text x="0" y="8.8" font-size="11.5" font-weight="bold" font-family="Liberation Sans, sans-serif" fill="#ff0000">F</text></svg>
<svg style="left:910px;top:107px" width="16" height="16" viewBox="0 0 16 16"><path d="M0.5 15.3L16 0.3" stroke="#000" stroke-width="0.95"/><path d="M1 15H15.5M4.5 11.5H15.5M8 8.2H15.5" stroke="#000" stroke-width="1.05"/><text x="-0.5" y="9.6" font-size="10.8" font-family="Liberation Sans, Noto Sans CJK SC, sans-serif" fill="#808000" font-weight="500">金</text></svg>
<svg style="left:933px;top:107px" width="16" height="16" viewBox="0 0 16 16"><path d="M0.5 15.3L16 0.3" stroke="#000" stroke-width="0.95"/><path d="M1 15H15.5M4.5 11.5H15.5M8 8.2H15.5" stroke="#000" stroke-width="1.05"/><text x="-0.5" y="9.6" font-size="10.8" font-family="Liberation Sans, Noto Sans CJK SC, sans-serif" fill="#ff0000" font-weight="500">神</text></svg>
<svg style="left:956px;top:107px" width="16" height="16" viewBox="0 0 16 16"><path d="M0.5 15.3L16 0.3" stroke="#000" stroke-width="0.95"/><path d="M1 15H15.5M4.5 11.5H15.5M8 8.2H15.5" stroke="#000" stroke-width="1.05"/><text x="-0.5" y="9.6" font-size="11.8" font-family="Liberation Sans, Noto Sans CJK SC, sans-serif" fill="#ff0000" font-weight="500">赢</text></svg>
<svg style="left:979px;top:107px" width="16" height="16" viewBox="0 0 16 16"><path d="M0.5 15.3L16 0.3" stroke="#000" stroke-width="0.95"/><path d="M1 15H15.5M4.5 11.5H15.5M8 8.2H15.5" stroke="#000" stroke-width="1.05"/><text x="-0.5" y="9.6" font-size="10.8" font-family="Liberation Sans, Noto Sans CJK SC, sans-serif" fill="#ff0000" font-weight="500">四</text></svg>
<svg class="abs" style="left:0;top:0" width="1221" height="674" viewBox="0 0 1221 674">
<rect x="0" y="128" width="1221" height="546" fill="#fff"/>
<g font-family="Liberation Sans, sans-serif" font-size="9" fill="#a9a9a9">
<text x="52.5" y="138" textLength="21.5" lengthAdjust="spacingAndGlyphs">08-27</text>
<text x="112" y="138" textLength="21.5" lengthAdjust="spacingAndGlyphs">09-11</text>
<text x="182" y="138" textLength="21.5" lengthAdjust="spacingAndGlyphs">09-25</text>
<text x="252" y="138" textLength="21.5" lengthAdjust="spacingAndGlyphs">10-16</text>
<text x="322" y="138" textLength="21.5" lengthAdjust="spacingAndGlyphs">10-30</text>
<text x="392" y="138" textLength="21.5" lengthAdjust="spacingAndGlyphs">11-13</text>
<text x="462" y="138" textLength="21.5" lengthAdjust="spacingAndGlyphs">11-27</text>
<text x="532" y="138" textLength="21.5" lengthAdjust="spacingAndGlyphs">12-11</text>
<text x="602" y="138" textLength="21.5" lengthAdjust="spacingAndGlyphs">12-25</text>
<text x="672" y="138" textLength="21.5" lengthAdjust="spacingAndGlyphs">01-12</text>
<text x="742" y="138" textLength="21.5" lengthAdjust="spacingAndGlyphs">01-26</text>
<text x="812" y="138" textLength="21.5" lengthAdjust="spacingAndGlyphs">02-09</text>
<text x="882" y="138" textLength="21.5" lengthAdjust="spacingAndGlyphs">03-02</text>
<text x="952" y="138" textLength="21.5" lengthAdjust="spacingAndGlyphs">03-16</text>
<text x="1022" y="138" textLength="21.5" lengthAdjust="spacingAndGlyphs">03-30</text>
<text x="1092" y="138" textLength="21.5" lengthAdjust="spacingAndGlyphs">04-13</text>
<text x="1162" y="138" textLength="21.5" lengthAdjust="spacingAndGlyphs">04-27</text>
</g>
<rect x="52" y="140" width="1169" height="1" fill="#a8a8a8"/>
<text x="-5.2" y="145.3" font-family="Liberation Mono, Noto Serif CJK SC, monospace" font-size="13.5" font-weight="600" fill="#0000ff"><tspan font-size="12">K</tspan><tspan x="2.6">线</tspan></text>
<text x="53" y="153.5" font-family="Liberation Serif, Noto Serif CJK SC, serif" font-size="12.5" letter-spacing="0.4" font-weight="500" fill="#000">极反通道</text>
<g font-family="Liberation Sans, sans-serif" font-size="12">
<text x="123" y="153.2" fill="#ff0000" textLength="69" lengthAdjust="spacingAndGlyphs">Tp=3808.4004</text>
<text x="202" y="153.2" fill="#0000ff" textLength="70" lengthAdjust="spacingAndGlyphs">Up=3539.8540</text>
<text x="280.5" y="153.2" fill="#000" textLength="71" lengthAdjust="spacingAndGlyphs">Md=3234.2493</text>
<text x="359.5" y="153.2" fill="#0000ff" textLength="71" lengthAdjust="spacingAndGlyphs">Dn=2825.9513</text>
<text x="438" y="153.2" fill="#ff0000" textLength="65.5" lengthAdjust="spacingAndGlyphs">Bt=2454.8201</text>
</g>
<text x="1122" y="153" font-family="Liberation Mono, Noto Serif CJK SC, monospace" font-size="13" fill="#0000ff"><tspan textLength="39" lengthAdjust="spacingAndGlyphs" font-size="12">1A0001</tspan><tspan x="1170.5" letter-spacing="-0.3" font-weight="600">上证指数</tspan></text>
<g shape-rendering="crispEdges">
<rect x="52" y="454" width="6" height="1" fill="#ff0000"/>
<rect x="62" y="454" width="1" height="4" fill="#008000"/>
<rect x="59" y="455" width="6" height="2" fill="#008000"/>
<rect x="69" y="457" width="1" height="2" fill="#ff0000"/>
<rect x="66.5" y="454.5" width="5" height="2" fill="none" stroke="#ff0000"/>
<rect x="73" y="451" width="6" height="1" fill="#ff0000"/>
<rect x="83" y="444" width="1" height="2" fill="#ff0000"/>
<rect x="80.5" y="446.5" width="5" height="4" fill="none" stroke="#ff0000"/>
<rect x="87.5" y="442.5" width="5" height="2" fill="none" stroke="#ff0000"/>
<rect x="97" y="442" width="1" height="1" fill="#ff0000"/>
<rect x="94.5" y="439.5" width="5" height="2" fill="none" stroke="#ff0000"/>
<rect x="104" y="436" width="1" height="3" fill="#ff0000"/>
<rect x="101" y="436" width="6" height="2" fill="#ff0000"/>
<rect x="111" y="434" width="1" height="3" fill="#008000"/>
<rect x="108" y="434" width="6" height="2" fill="#008000"/>
<rect x="115" y="438" width="6" height="1" fill="#008000"/>
<rect x="125" y="434" width="1" height="6" fill="#008000"/>
<rect x="122" y="437" width="6" height="1" fill="#008000"/>
<rect x="132" y="440" width="1" height="1" fill="#ff0000"/>
<rect x="129.5" y="436.5" width="5" height="3" fill="none" stroke="#ff0000"/>
<rect x="136" y="433" width="6" height="2" fill="#ff0000"/>
<rect x="143" y="433" width="6" height="8" fill="#008000"/>
<rect x="153" y="439" width="1" height="4" fill="#ff0000"/>
<rect x="150" y="440" width="6" height="1" fill="#ff0000"/>
<rect x="157.5" y="438.5" width="5" height="2" fill="none" stroke="#ff0000"/>
<rect x="164.5" y="436.5" width="5" height="2" fill="none" stroke="#ff0000"/>
<rect x="174" y="436" width="1" height="7" fill="#008000"/>
<rect x="171" y="436" width="6" height="5" fill="#008000"/>
<rect x="178.5" y="438.5" width="5" height="3" fill="none" stroke="#ff0000"/>
<rect x="188" y="432" width="1" height="2" fill="#ff0000"/>
<rect x="188" y="440" width="1" height="1" fill="#ff0000"/>
<rect x="185.5" y="434.5" width="5" height="5" fill="none" stroke="#ff0000"/>
<rect x="195" y="430" width="1" height="5" fill="#008000"/>
<rect x="192" y="432" width="6" height="1" fill="#008000"/>
<rect x="202" y="433" width="1" height="2" fill="#ff0000"/>
<rect x="199" y="433" width="6" height="1" fill="#ff0000"/>
<rect x="209" y="430" width="1" height="3" fill="#ff0000"/>
<rect x="206" y="431" width="6" height="1" fill="#ff0000"/>
<rect x="216" y="429" width="1" height="3" fill="#ff0000"/>
<rect x="213" y="430" width="6" height="1" fill="#ff0000"/>
<rect x="223" y="429" width="1" height="1" fill="#ff0000"/>
<rect x="220.5" y="426.5" width="5" height="2" fill="none" stroke="#ff0000"/>
<rect x="230" y="426" width="1" height="4" fill="#ff0000"/>
<rect x="227" y="426" width="6" height="1" fill="#ff0000"/>
<rect x="237" y="427" width="1" height="2" fill="#008000"/>
<rect x="234" y="427" width="6" height="1" fill="#008000"/>
<rect x="244" y="429" width="1" height="4" fill="#008000"/>
<rect x="241" y="429" width="6" height="1" fill="#008000"/>
<rect x="251" y="428" width="1" height="5" fill="#008000"/>
<rect x="248" y="430" width="6" height="1" fill="#008000"/>
<rect x="258" y="428" width="1" height="5" fill="#ff0000"/>
<rect x="255" y="428" width="6" height="2" fill="#ff0000"/>
<rect x="265" y="427" width="1" height="4" fill="#008000"/>
<rect x="262" y="430" width="6" height="1" fill="#008000"/>
<rect x="272" y="432" width="1" height="7" fill="#008000"/>
<rect x="269" y="432" width="6" height="1" fill="#008000"/>
<rect x="279" y="430" width="1" height="3" fill="#ff0000"/>
<rect x="276" y="432" width="6" height="1" fill="#ff0000"/>
<rect x="286" y="431" width="1" height="4" fill="#008000"/>
<rect x="283" y="431" width="6" height="2" fill="#008000"/>
<rect x="293" y="432" width="1" height="4" fill="#008000"/>
<rect x="290" y="433" width="6" height="2" fill="#008000"/>
<rect x="300" y="436" width="1" height="5" fill="#008000"/>
<rect x="297" y="436" width="6" height="4" fill="#008000"/>
<rect x="304" y="440" width="6" height="1" fill="#008000"/>
<rect x="314" y="440" width="1" height="3" fill="#008000"/>
<rect x="311" y="441" width="6" height="1" fill="#008000"/>
<rect x="318.5" y="434.5" width="5" height="6" fill="none" stroke="#ff0000"/>
<rect x="328" y="426" width="1" height="2" fill="#ff0000"/>
<rect x="325.5" y="428.5" width="5" height="4" fill="none" stroke="#ff0000"/>
<rect x="335" y="428" width="1" height="1" fill="#ff0000"/>
<rect x="332.5" y="425.5" width="5" height="2" fill="none" stroke="#ff0000"/>
<rect x="342" y="424" width="1" height="3" fill="#ff0000"/>
<rect x="339.5" y="420.5" width="5" height="3" fill="none" stroke="#ff0000"/>
<rect x="349" y="417" width="1" height="4" fill="#ff0000"/>
<rect x="346" y="419" width="6" height="1" fill="#ff0000"/>
<rect x="356" y="418" width="1" height="3" fill="#ff0000"/>
<rect x="353" y="419" width="6" height="1" fill="#ff0000"/>
<rect x="363" y="419" width="1" height="2" fill="#008000"/>
<rect x="360" y="419" width="6" height="1" fill="#008000"/>
<rect x="370" y="419" width="1" height="4" fill="#ff0000"/>
<rect x="367" y="419" width="6" height="1" fill="#ff0000"/>
<rect x="377" y="416" width="1" height="7" fill="#008000"/>
<rect x="374" y="419" width="6" height="1" fill="#008000"/>
<rect x="384" y="417" width="1" height="2" fill="#ff0000"/>
<rect x="381.5" y="412.5" width="5" height="4" fill="none" stroke="#ff0000"/>
<rect x="391" y="406" width="1" height="10" fill="#008000"/>
<rect x="388" y="410" width="6" height="2" fill="#008000"/>
<rect x="398" y="407" width="1" height="2" fill="#ff0000"/>
<rect x="398" y="414" width="1" height="3" fill="#ff0000"/>
<rect x="395.5" y="409.5" width="5" height="4" fill="none" stroke="#ff0000"/>
<rect x="405" y="406" width="1" height="5" fill="#008000"/>
<rect x="402" y="407" width="6" height="2" fill="#008000"/>
<rect x="412" y="410" width="1" height="4" fill="#ff0000"/>
<rect x="409" y="410" width="6" height="1" fill="#ff0000"/>
<rect x="416" y="406" width="6" height="5" fill="#008000"/>
<rect x="426" y="412" width="1" height="3" fill="#008000"/>
<rect x="423" y="412" width="6" height="2" fill="#008000"/>
<rect x="433" y="414" width="1" height="2" fill="#008000"/>
<rect x="430" y="415" width="6" height="1" fill="#008000"/>
<rect x="440" y="414" width="1" height="3" fill="#ff0000"/>
<rect x="437" y="414" width="6" height="2" fill="#ff0000"/>
<rect x="447" y="416" width="1" height="1" fill="#ff0000"/>
<rect x="444.5" y="410.5" width="5" height="5" fill="none" stroke="#ff0000"/>
<rect x="454" y="400" width="1" height="1" fill="#ff0000"/>
<rect x="454" y="406" width="1" height="1" fill="#ff0000"/>
<rect x="451.5" y="401.5" width="5" height="4" fill="none" stroke="#ff0000"/>
<rect x="458.5" y="396.5" width="5" height="5" fill="none" stroke="#ff0000"/>
<rect x="465.5" y="390.5" width="5" height="3" fill="none" stroke="#ff0000"/>
<rect x="475" y="384" width="1" height="6" fill="#ff0000"/>
<rect x="472" y="384" width="6" height="2" fill="#ff0000"/>
<rect x="482" y="385" width="1" height="2" fill="#ff0000"/>
<rect x="479.5" y="377.5" width="5" height="7" fill="none" stroke="#ff0000"/>
<rect x="489" y="371" width="1" height="8" fill="#008000"/>
<rect x="486" y="375" width="6" height="1" fill="#008000"/>
<rect x="496" y="361" width="1" height="2" fill="#ff0000"/>
<rect x="493.5" y="363.5" width="5" height="15" fill="none" stroke="#ff0000"/>
<rect x="503" y="352" width="1" height="15" fill="#ff0000"/>
<rect x="500" y="361" width="6" height="2" fill="#ff0000"/>
<rect x="510" y="360" width="1" height="2" fill="#ff0000"/>
<rect x="507.5" y="341.5" width="5" height="18" fill="none" stroke="#ff0000"/>
<rect x="517" y="328" width="1" height="27" fill="#ff0000"/>
<rect x="514" y="334" width="6" height="2" fill="#ff0000"/>
<rect x="524" y="316" width="1" height="4" fill="#ff0000"/>
<rect x="524" y="337" width="1" height="6" fill="#ff0000"/>
<rect x="521.5" y="320.5" width="5" height="16" fill="none" stroke="#ff0000"/>
<rect x="531" y="309" width="1" height="42" fill="#008000"/>
<rect x="528" y="324" width="6" height="22" fill="#008000"/>
<rect x="538" y="347" width="1" height="8" fill="#ff0000"/>
<rect x="535.5" y="333.5" width="5" height="13" fill="none" stroke="#ff0000"/>
<rect x="545" y="329" width="1" height="7" fill="#ff0000"/>
<rect x="545" y="339" width="1" height="3" fill="#ff0000"/>
<rect x="542.5" y="336.5" width="5" height="2" fill="none" stroke="#ff0000"/>
<rect x="552" y="329" width="1" height="10" fill="#ff0000"/>
<rect x="549" y="334" width="6" height="2" fill="#ff0000"/>
<rect x="559" y="330" width="1" height="2" fill="#ff0000"/>
<rect x="559" y="337" width="1" height="5" fill="#ff0000"/>
<rect x="556.5" y="332.5" width="5" height="4" fill="none" stroke="#ff0000"/>
<rect x="563.5" y="320.5" width="5" height="11" fill="none" stroke="#ff0000"/>
<rect x="573" y="310" width="1" height="4" fill="#ff0000"/>
<rect x="573" y="318" width="1" height="7" fill="#ff0000"/>
<rect x="570.5" y="314.5" width="5" height="3" fill="none" stroke="#ff0000"/>
<rect x="580" y="309" width="1" height="10" fill="#008000"/>
<rect x="577" y="313" width="6" height="1" fill="#008000"/>
<rect x="587" y="304" width="1" height="2" fill="#ff0000"/>
<rect x="587" y="314" width="1" height="7" fill="#ff0000"/>
<rect x="584.5" y="306.5" width="5" height="7" fill="none" stroke="#ff0000"/>
<rect x="594" y="292" width="1" height="17" fill="#008000"/>
<rect x="591" y="301" width="6" height="1" fill="#008000"/>
<rect x="601" y="301" width="1" height="19" fill="#008000"/>
<rect x="598" y="309" width="6" height="9" fill="#008000"/>
<rect x="608" y="316" width="1" height="19" fill="#008000"/>
<rect x="605" y="316" width="6" height="12" fill="#008000"/>
<rect x="615" y="325" width="1" height="4" fill="#ff0000"/>
<rect x="612.5" y="312.5" width="5" height="12" fill="none" stroke="#ff0000"/>
<rect x="622" y="296" width="1" height="2" fill="#ff0000"/>
<rect x="622" y="311" width="1" height="2" fill="#ff0000"/>
<rect x="619.5" y="298.5" width="5" height="12" fill="none" stroke="#ff0000"/>
<rect x="629" y="287" width="1" height="16" fill="#008000"/>
<rect x="626" y="287" width="6" height="8" fill="#008000"/>
<rect x="636" y="291" width="1" height="11" fill="#ff0000"/>
<rect x="633" y="294" width="6" height="1" fill="#ff0000"/>
<rect x="643" y="282" width="1" height="2" fill="#ff0000"/>
<rect x="643" y="294" width="1" height="3" fill="#ff0000"/>
<rect x="640.5" y="284.5" width="5" height="9" fill="none" stroke="#ff0000"/>
<rect x="650" y="261" width="1" height="3" fill="#ff0000"/>
<rect x="650" y="279" width="1" height="1" fill="#ff0000"/>
<rect x="647.5" y="264.5" width="5" height="14" fill="none" stroke="#ff0000"/>
<rect x="657" y="257" width="1" height="7" fill="#ff0000"/>
<rect x="657" y="268" width="1" height="4" fill="#ff0000"/>
<rect x="654.5" y="264.5" width="5" height="3" fill="none" stroke="#ff0000"/>
<rect x="664" y="268" width="1" height="1" fill="#ff0000"/>
<rect x="661.5" y="260.5" width="5" height="7" fill="none" stroke="#ff0000"/>
<rect x="668" y="261" width="6" height="14" fill="#008000"/>
<rect x="678" y="255" width="1" height="23" fill="#ff0000"/>
<rect x="675" y="275" width="6" height="2" fill="#ff0000"/>
<rect x="685" y="278" width="1" height="14" fill="#008000"/>
<rect x="682" y="280" width="6" height="4" fill="#008000"/>
<rect x="692" y="280" width="1" height="8" fill="#ff0000"/>
<rect x="689" y="284" width="6" height="2" fill="#ff0000"/>
<rect x="699" y="279" width="1" height="13" fill="#008000"/>
<rect x="696" y="282" width="6" height="4" fill="#008000"/>
<rect x="706" y="287" width="1" height="2" fill="#ff0000"/>
<rect x="703.5" y="268.5" width="5" height="18" fill="none" stroke="#ff0000"/>
<rect x="713" y="256" width="1" height="4" fill="#ff0000"/>
<rect x="713" y="266" width="1" height="1" fill="#ff0000"/>
<rect x="710.5" y="260.5" width="5" height="5" fill="none" stroke="#ff0000"/>
<rect x="720" y="280" width="1" height="28" fill="#008000"/>
<rect x="717" y="291" width="6" height="12" fill="#008000"/>
<rect x="727" y="291" width="1" height="3" fill="#ff0000"/>
<rect x="727" y="304" width="1" height="3" fill="#ff0000"/>
<rect x="724.5" y="294.5" width="5" height="9" fill="none" stroke="#ff0000"/>
<rect x="734" y="267" width="1" height="2" fill="#ff0000"/>
<rect x="734" y="291" width="1" height="3" fill="#ff0000"/>
<rect x="731.5" y="269.5" width="5" height="21" fill="none" stroke="#ff0000"/>
<rect x="741" y="263" width="1" height="11" fill="#ff0000"/>
<rect x="738" y="266" width="6" height="2" fill="#ff0000"/>
<rect x="748" y="256" width="1" height="13" fill="#008000"/>
<rect x="745" y="264" width="6" height="1" fill="#008000"/>
<rect x="755" y="265" width="1" height="5" fill="#ff0000"/>
<rect x="752.5" y="259.5" width="5" height="5" fill="none" stroke="#ff0000"/>
<rect x="762" y="258" width="1" height="17" fill="#008000"/>
<rect x="759" y="258" width="6" height="5" fill="#008000"/>
<rect x="769" y="265" width="1" height="10" fill="#008000"/>
<rect x="766" y="269" width="6" height="3" fill="#008000"/>
<rect x="776" y="275" width="1" height="10" fill="#ff0000"/>
<rect x="773" y="279" width="6" height="1" fill="#ff0000"/>
<rect x="783" y="276" width="1" height="13" fill="#008000"/>
<rect x="780" y="277" width="6" height="11" fill="#008000"/>
<rect x="790" y="295" width="1" height="8" fill="#008000"/>
<rect x="787" y="298" width="6" height="4" fill="#008000"/>
<rect x="797" y="288" width="1" height="1" fill="#ff0000"/>
<rect x="797" y="297" width="1" height="4" fill="#ff0000"/>
<rect x="794.5" y="289.5" width="5" height="7" fill="none" stroke="#ff0000"/>
<rect x="804" y="284" width="1" height="11" fill="#008000"/>
<rect x="801" y="287" width="6" height="7" fill="#008000"/>
<rect x="811" y="281" width="1" height="20" fill="#008000"/>
<rect x="808" y="281" width="6" height="19" fill="#008000"/>
<rect x="818" y="302" width="1" height="13" fill="#008000"/>
<rect x="815" y="303" width="6" height="6" fill="#008000"/>
<rect x="825" y="312" width="1" height="4" fill="#ff0000"/>
<rect x="822.5" y="307.5" width="5" height="4" fill="none" stroke="#ff0000"/>
<rect x="832" y="299" width="1" height="1" fill="#ff0000"/>
<rect x="832" y="308" width="1" height="1" fill="#ff0000"/>
<rect x="829.5" y="300.5" width="5" height="7" fill="none" stroke="#ff0000"/>
<rect x="839" y="295" width="1" height="6" fill="#ff0000"/>
<rect x="836" y="297" width="6" height="2" fill="#ff0000"/>
<rect x="846" y="292" width="1" height="2" fill="#ff0000"/>
<rect x="846" y="297" width="1" height="4" fill="#ff0000"/>
<rect x="843.5" y="294.5" width="5" height="2" fill="none" stroke="#ff0000"/>
<rect x="853" y="283" width="1" height="6" fill="#ff0000"/>
<rect x="850.5" y="289.5" width="5" height="2" fill="none" stroke="#ff0000"/>
<rect x="860" y="285" width="1" height="1" fill="#ff0000"/>
<rect x="860" y="289" width="1" height="1" fill="#ff0000"/>
<rect x="857.5" y="286.5" width="5" height="2" fill="none" stroke="#ff0000"/>
<rect x="867" y="280" width="1" height="4" fill="#ff0000"/>
<rect x="864" y="281" width="6" height="2" fill="#ff0000"/>
<rect x="874" y="280" width="1" height="8" fill="#008000"/>
<rect x="871" y="280" width="6" height="4" fill="#008000"/>
<rect x="881" y="286" width="1" height="4" fill="#ff0000"/>
<rect x="878.5" y="273.5" width="5" height="12" fill="none" stroke="#ff0000"/>
<rect x="888" y="269" width="1" height="6" fill="#ff0000"/>
<rect x="885" y="271" width="6" height="2" fill="#ff0000"/>
<rect x="895" y="267" width="1" height="7" fill="#ff0000"/>
<rect x="892" y="267" width="6" height="1" fill="#ff0000"/>
<rect x="902" y="270" width="1" height="9" fill="#008000"/>
<rect x="899" y="270" width="6" height="8" fill="#008000"/>
<rect x="909" y="279" width="1" height="2" fill="#ff0000"/>
<rect x="906.5" y="276.5" width="5" height="2" fill="none" stroke="#ff0000"/>
<rect x="916" y="280" width="1" height="7" fill="#008000"/>
<rect x="913" y="280" width="6" height="1" fill="#008000"/>
<rect x="923" y="280" width="1" height="5" fill="#008000"/>
<rect x="920" y="282" width="6" height="1" fill="#008000"/>
<rect x="930" y="285" width="1" height="6" fill="#ff0000"/>
<rect x="927.5" y="273.5" width="5" height="11" fill="none" stroke="#ff0000"/>
<rect x="937" y="273" width="1" height="6" fill="#008000"/>
<rect x="934" y="275" width="6" height="1" fill="#008000"/>
<rect x="944" y="269" width="1" height="7" fill="#ff0000"/>
<rect x="941" y="275" width="6" height="1" fill="#ff0000"/>
<rect x="951" y="264" width="1" height="2" fill="#ff0000"/>
<rect x="951" y="271" width="1" height="3" fill="#ff0000"/>
<rect x="948.5" y="266.5" width="5" height="4" fill="none" stroke="#ff0000"/>
<rect x="958" y="259" width="1" height="6" fill="#ff0000"/>
<rect x="955" y="261" width="6" height="2" fill="#ff0000"/>
<rect x="965" y="258" width="1" height="3" fill="#ff0000"/>
<rect x="962.5" y="249.5" width="5" height="8" fill="none" stroke="#ff0000"/>
<rect x="972" y="244" width="1" height="2" fill="#ff0000"/>
<rect x="969.5" y="240.5" width="5" height="3" fill="none" stroke="#ff0000"/>
<rect x="979" y="238" width="1" height="1" fill="#ff0000"/>
<rect x="976.5" y="227.5" width="5" height="10" fill="none" stroke="#ff0000"/>
<rect x="986" y="223" width="1" height="9" fill="#ff0000"/>
<rect x="983" y="227" width="6" height="1" fill="#ff0000"/>
<rect x="993" y="218" width="1" height="2" fill="#ff0000"/>
<rect x="993" y="225" width="1" height="4" fill="#ff0000"/>
<rect x="990.5" y="220.5" width="5" height="4" fill="none" stroke="#ff0000"/>
<rect x="1000" y="216" width="1" height="2" fill="#ff0000"/>
<rect x="997.5" y="209.5" width="5" height="6" fill="none" stroke="#ff0000"/>
<rect x="1007" y="204" width="1" height="19" fill="#008000"/>
<rect x="1004" y="207" width="6" height="1" fill="#008000"/>
</g>
<g fill="none" stroke-width="1" shape-rendering="crispEdges">
<polyline stroke="#ff0000" points="55,442.8 62,442.2 69,441.5 76,440.8 83,439.9 90,439 97,437.9 104,436.6 111,435.1 118,433.6 125,432.1 132,430.6 139,429.2 146,427.9 153,426.6 160,425.3 167,424.1 174,422.9 181,421.7 188,420.6 195,419.5 202,418.5 209,417.4 216,416.5 223,415.5 230,414.6 237,413.8 244,413 251,412.3 258,411.6 265,410.9 272,410.3 279,409.7 286,409.2 293,408.8 300,408.4 307,408.1 314,407.8 321,407.4 328,406.9 335,406.2 342,405.6 349,404.9 356,404.3 363,403.6 370,402.7 377,401.3 384,399.3 391,397.7 398,396.4 405,395.2 412,394 419,392.9 426,391.9 433,391 440,390.1 447,389.2 454,388.3 461,387.3 468,386.1 475,384.8 482,383.1 489,381.1 496,378.6 503,374.8 510,369.7 517,364 524,357.5 531,350.1 538,346 545,342.8 552,339.3 559,335.9 566,332.4 573,328.6 580,324.4 587,320.1 594,315.9 601,311.8 608,307.8 615,303.8 622,299.7 629,295.1 636,290.3 643,285.3 650,280.3 657,275.3 664,270.4 671,265.5 678,260.8 685,256.3 692,251.9 699,247.4 706,242.6 713,237.6 720,232.7 727,228.4 734,224.7 741,220.7 748,216.1 755,211.6 762,207.5 769,203.6 776,200.2 783,197.2 790,194.1 797,191.1 804,187.8 811,183.5 818,180.9 825,179.1 832,177.7 839,177.8 846,178.2 853,179.1 860,181.1 867,184.7 874,188.3 881,188.3 888,188.3 895,187.6 902,186.7 909,186.6 916,186.5 923,186.5 930,186.7 937,187.5 944,188.3 951,188.7 958,188.7 965,188.8 972,188.8 979,188.7 986,188.2 993,187.4 1000,186.3 1007,183.7 1014,185.1 1021,188 1028,189.8 1035,190.8 1042,191.7 1049,192.6 1056,193.7 1063,195.1 1070,196.5 1077,197.6 1084,198.5 1091,199.2 1098,199.9 1105,200.2 1112,200.5 1119,200.6 1126,200.8 1133,201 1140,201.4 1147,201.9 1154,202.3 1161,202.4 1168,202.1 1175,201.5 1182,200.9 1189,200.3 1196,199.7 1203,199.1 1210,198.4 1217,197.7"/>
<polyline stroke="#0000ff" points="52,456.3 59,455.4 66,454.5 73,453.7 80,452.9 87,451.9 94,450.9 101,449.8 108,448.7 115,447.5 122,446.3 129,445.1 136,443.9 143,442.8 150,441.8 157,440.9 164,440.1 171,439.2 178,438.2 185,437.2 192,436.1 199,435.1 206,434 213,432.9 220,431.8 227,430.6 234,429.5 241,428.7 248,428 255,427.6 262,427.2 269,426.8 276,426.5 283,426.1 290,425.8 297,425.4 304,425 311,424.6 318,424.1 325,423.4 332,422.3 339,421.1 346,420.2 353,419.6 360,419.1 367,418.6 374,417.8 381,416.8 388,415.7 395,414.4 402,413.2 409,411.9 416,410.8 423,409.9 430,409.1 437,408.4 444,407.8 451,407.1 458,406.4 465,405.5 472,404.4 479,403.1 486,401.5 493,399.6 500,397.1 507,393.8 514,390 521,385.8 528,380.7 535,376.6 542,373.9 549,371.2 556,368.5 563,365.7 570,362.8 577,359.4 584,355.8 591,352.2 598,348.9 605,346 612,343.2 619,340.3 626,337.1 633,333.6 640,329.8 647,325.8 654,321.3 661,316.2 668,311 675,306.5 682,303 689,300 696,296.9 703,293.3 710,289 717,284.5 724,280.3 731,276.8 738,273.7 745,270.5 752,266.8 759,262.9 766,259.2 773,255.9 780,252.7 787,249.7 794,246.7 801,243.8 808,241.2 815,238.9 822,236.8 829,235.5 836,234.8 843,234.5 850,234.5 857,234.5 864,234.5 871,237 878,237.4 885,237.1 892,236.3 899,234.9 906,234.3 913,233.9 920,233.6 927,233.4 934,233.2 941,233.1 948,232.9 955,232.7 962,232.2 969,231.7 976,231.2 983,230.5 990,229.7 997,228.5 1004,227 1011,226.8 1018,227.3 1025,227.6 1032,227.4 1039,226.9 1046,226.4 1053,226.2 1060,226.2 1067,226.2 1074,226.2 1081,226.2 1088,226.1 1095,225.9 1102,225.6 1109,225.2 1116,224.8 1123,224.4 1130,223.7 1137,223 1144,222.1 1151,221.2 1158,220.2 1165,219 1172,217.9 1179,216.9 1186,215.9 1193,214.9 1200,213.9 1207,212.9 1214,212 1217,211.6"/>
<polyline stroke="#000" points="55,469.5 62,468.6 69,467.8 76,467 83,466.1 90,465.3 97,464.4 104,463.5 111,462.6 118,461.8 125,460.9 132,460 139,459.1 146,458.2 153,457.4 160,456.5 167,455.7 174,454.8 181,453.9 188,453 195,452.1 202,451.1 209,450.1 216,449 223,448 230,447.1 237,446.3 244,445.6 251,444.9 258,444.3 265,443.7 272,443.2 279,442.7 286,442.2 293,441.8 300,441.4 307,441.1 314,440.8 321,440.5 328,440.1 335,439.5 342,438.6 349,437.9 356,437.5 363,437 370,436.5 377,435.8 384,435 391,434.1 398,433.1 405,432.2 412,431.3 419,430.4 426,429.6 433,428.9 440,428.2 447,427.5 454,426.7 461,425.9 468,425 475,424 482,422.8 489,421.5 496,420.1 503,418.4 510,416.7 517,414.8 524,412.8 531,410.7 538,408.8 545,407 552,405.3 559,403.5 566,401.5 573,399.2 580,396.5 587,393.5 594,390.6 601,388.2 608,385.9 615,383.7 622,381.4 629,378.7 636,375.8 643,372.8 650,369.8 657,366.8 664,363.8 671,360.7 678,357.6 685,354.5 692,351.3 699,348.2 706,345.3 713,342.6 720,339.8 727,336.9 734,333.7 741,330.4 748,327.3 755,324.5 762,321.9 769,319.4 776,316.9 783,314.5 790,312.1 797,309.8 804,307.9 811,306.1 818,304.4 825,302.8 832,301.2 839,299.8 846,298.4 853,297 860,295.5 867,294.2 874,292.9 881,291.9 888,290.9 895,290 902,289.1 909,288.3 916,287.4 923,286.6 930,285.8 937,284.9 944,284 951,283 958,282 965,281 972,280.1 979,279.1 986,278.1 993,277.1 1000,275.9 1007,274.7 1014,273.4 1021,272 1028,270.5 1035,268.9 1042,267.3 1049,265.8 1056,264.1 1063,262.4 1070,260.8 1077,259.4 1084,258.1 1091,256.9 1098,255.8 1105,254.6 1112,253.4 1119,252.3 1126,251 1133,249.5 1140,247.6 1147,245.3 1154,243.1 1161,241 1168,239 1175,237.1 1182,235.3 1189,233.5 1196,231.9 1203,230.4 1210,228.9 1217,227.6"/>
<polyline stroke="#0000ff" points="55,488.5 62,487.9 69,487.2 76,486.6 83,485.9 90,485.3 97,484.6 104,483.9 111,483.2 118,482.5 125,481.8 132,481.1 139,480.4 146,479.7 153,479 160,478.3 167,477.6 174,476.9 181,476.2 188,475.5 195,474.7 202,473.9 209,473.1 216,472.3 223,471.5 230,470.7 237,470 244,469.4 251,468.9 258,468.4 265,468 272,467.5 279,467.1 286,466.7 293,466.3 300,465.9 307,465.6 314,465.3 321,464.9 328,464.4 335,463.8 342,462.8 349,461.8 356,460.9 363,460.3 370,460 377,459.8 384,459.7 391,459.5 398,459.2 405,458.7 412,458.1 419,457.3 426,456.6 433,456 440,455.4 447,454.9 454,454.3 461,453.8 468,453.1 475,452.3 482,451.6 489,451.3 496,451.3 503,451.5 510,451.8 517,452.3 524,453.5 531,454.5 538,454.4 545,453.8 552,452.6 559,450.6 566,449 573,447.6 580,446.3 587,445.1 594,444 601,443 608,442.1 615,441.4 622,440.5 629,439.4 636,438 643,436 650,433.8 657,431.5 664,429.4 671,427.2 678,424.9 685,422.7 692,420.7 699,419.1 706,417.8 713,416.6 720,415.5 727,414.3 734,412.8 741,410.8 748,408.5 755,406 762,403.5 769,401.2 776,398.9 783,396.5 790,394.3 797,392.5 804,391.2 811,390.4 818,389.9 825,389.2 832,388.2 839,386 846,383 853,379.9 860,375.9 867,371.9 874,368.8 881,366.6 888,364.8 895,363.1 902,361.5 909,360.1 916,358.8 923,357.5 930,356 937,354.3 944,352 951,349.6 958,347.5 965,345.9 972,344.7 979,343.4 986,342 993,340.4 1000,338.6 1007,336.5 1014,333.1 1021,329.7 1028,327 1035,324.4 1042,321.8 1049,319.2 1056,316.8 1063,312.8 1070,307.6 1077,303.6 1084,300.9 1091,298.6 1098,296.4 1105,294 1112,291.3 1119,288.6 1126,285.7 1133,282.6 1140,279.2 1147,275.5 1154,271.9 1161,268.6 1168,265.6 1175,262.8 1182,260.1 1189,257.6 1196,255.3 1203,253.1 1210,251 1217,249.1"/>
<polyline stroke="#ff0000" points="55.4,505.3 62.4,504.7 69.4,504.1 76.4,503.6 83.4,503.1 90.4,502.7 97.4,502.2 104.4,501.9 111.4,501.6 118.4,501.3 125.4,501 132.4,500.8 139.4,500.5 146.4,500.2 153.4,499.8 160.4,499.5 167.4,499.2 174.4,498.8 181.4,498.4 188.4,498 195.4,497.5 202.4,496.9 209.4,496.1 216.4,495.2 223.4,494.1 230.4,492.9 237.4,491.9 244.4,490.9 251.4,490 258.4,489.1 265.4,488.2 272.4,487.5 279.4,486.9 286.4,486.5 293.4,486 300.4,485.7 307.4,485.4 314.4,485.3 321.4,485.7 328.4,486.5 335.4,486.4 342.4,485.6 349.4,484.7 356.4,483.9 363.4,483.6 370.4,483.7 377.4,484 384.4,484.3 391.4,484.5 398.4,484.5 405.4,484 412.4,483.1 419.4,482 426.4,481.2 433.4,480.9 440.4,480.7 447.4,480.6 454.4,480.5 461.4,480.3 468.4,480 475.4,479.4 482.4,478.9 489.4,478.6 496.4,479.1 503.4,480.3 510.4,482.2 517.4,484.9 524.4,488.1 531.4,493.2 538.4,495.3 545.4,495.3 552.4,495.3 559.4,495.3 566.4,495.2 573.4,494.9 580.4,494.4 587.4,493.9 594.4,493.6 601.4,493.6 608.4,493.8 615.4,494 622.4,494.2 629.4,494.3 636.4,493.9 643.4,492.9 650.4,491.5 657.4,490.1 664.4,488.7 671.4,487.1 678.4,485.6 685.4,484.3 692.4,483.2 699.4,482.5 706.4,482 713.4,481.8 720.4,482.3 727.4,483.2 734.4,483.6 741.4,482.8 748.4,481.1 755.4,479.1 762.4,477 769.4,475.4 776.4,473.6 783.4,471.9 790.4,470.3 797.4,469.1 804.4,468.5 811.4,468.4 818.4,468.3 825.4,468.1 832.4,467.7 839.4,465 846.4,460.8 853.4,456.3 860.4,450.5 867.4,443.8 874.4,435.6 881.4,432.6 888.4,430.6 895.4,429.1 902.4,427.4 909.4,425.8 916.4,424.4 923.4,422.9 930.4,421.1 937.4,418.6 944.4,414.9 951.4,410.8 958.4,407.5 965.4,405.6 972.4,404.2 979.4,402.8 986.4,401.2 993.4,399.6 1000.4,397.6 1007.4,395 1014.4,390.1 1021.4,384.3 1028.4,379.8 1035.4,376 1042.4,372.4 1049.4,368.5 1056.4,363.8 1063.4,357 1070.4,349 1077.4,343.2 1084.4,340 1091.4,337 1098.4,333.5 1105.4,329.8 1112.4,326 1119.4,322.2 1126.4,318.3 1133.4,314.3 1140.4,310.1 1147.4,305.7 1154.4,300.7 1161.4,295.5 1168.4,290.6 1175.4,286.3 1182.4,282.5 1189.4,279 1196.4,275.7 1203.4,272.6 1210.4,269.7 1217,267.2"/>
</g>
<g stroke="#0000ff" stroke-width="1" fill="none" shape-rendering="crispEdges"><line x1="69" y1="458.3" x2="89.5" y2="451.3"/><polyline points="1007.5,203.3 1026.5,207.3"/></g>
<line x1="1010" y1="207.5" x2="1221" y2="207.5" stroke="#8c8c8c" stroke-width="1" stroke-dasharray="5 2" shape-rendering="crispEdges"/>
<g font-family="Liberation Sans, sans-serif" font-size="12" fill="#3030ff">
<text x="89.3" y="455.9" textLength="59.2" lengthAdjust="spacingAndGlyphs">2193.2600</text>
<text x="1027.5" y="219" textLength="59" lengthAdjust="spacingAndGlyphs">3715.8701</text>
</g>
<g stroke="#9a9a9a" stroke-width="1" stroke-dasharray="3 3" shape-rendering="crispEdges">
<line x1="52" y1="524.5" x2="1221" y2="524.5"/>
<line x1="52" y1="542.5" x2="1221" y2="542.5"/>
<line x1="52" y1="558.5" x2="1221" y2="558.5"/>
<line x1="52" y1="574.5" x2="1221" y2="574.5"/>
</g>
<g shape-rendering="crispEdges">
<rect x="52.5" y="580.5" width="5" height="9" fill="none" stroke="#ff0000"/>
<rect x="59" y="579" width="6" height="11" fill="#008000"/>
<rect x="66.5" y="581.5" width="5" height="8" fill="none" stroke="#ff0000"/>
<rect x="73.5" y="579.5" width="5" height="10" fill="none" stroke="#ff0000"/>
<rect x="80.5" y="574.5" width="5" height="15" fill="none" stroke="#ff0000"/>
<rect x="87.5" y="572.5" width="5" height="17" fill="none" stroke="#ff0000"/>
<rect x="94.5" y="573.5" width="5" height="16" fill="none" stroke="#ff0000"/>
<rect x="101.5" y="572.5" width="5" height="17" fill="none" stroke="#ff0000"/>
<rect x="108" y="573" width="6" height="17" fill="#008000"/>
<rect x="115" y="574" width="6" height="16" fill="#008000"/>
<rect x="122" y="571" width="6" height="19" fill="#008000"/>
<rect x="129.5" y="573.5" width="5" height="16" fill="none" stroke="#ff0000"/>
<rect x="136.5" y="572.5" width="5" height="17" fill="none" stroke="#ff0000"/>
<rect x="143" y="564" width="6" height="26" fill="#008000"/>
<rect x="150.5" y="572.5" width="5" height="17" fill="none" stroke="#ff0000"/>
<rect x="157.5" y="574.5" width="5" height="15" fill="none" stroke="#ff0000"/>
<rect x="164.5" y="575.5" width="5" height="14" fill="none" stroke="#ff0000"/>
<rect x="171" y="575" width="6" height="15" fill="#008000"/>
<rect x="178.5" y="577.5" width="5" height="12" fill="none" stroke="#ff0000"/>
<rect x="185.5" y="571.5" width="5" height="18" fill="none" stroke="#ff0000"/>
<rect x="192" y="571" width="6" height="19" fill="#008000"/>
<rect x="199.5" y="575.5" width="5" height="14" fill="none" stroke="#ff0000"/>
<rect x="206.5" y="573.5" width="5" height="16" fill="none" stroke="#ff0000"/>
<rect x="213.5" y="573.5" width="5" height="16" fill="none" stroke="#ff0000"/>
<rect x="220.5" y="573.5" width="5" height="16" fill="none" stroke="#ff0000"/>
<rect x="227.5" y="570.5" width="5" height="19" fill="none" stroke="#ff0000"/>
<rect x="234" y="571" width="6" height="19" fill="#008000"/>
<rect x="241" y="573" width="6" height="17" fill="#008000"/>
<rect x="248" y="573" width="6" height="17" fill="#008000"/>
<rect x="255.5" y="573.5" width="5" height="16" fill="none" stroke="#ff0000"/>
<rect x="262" y="569" width="6" height="21" fill="#008000"/>
<rect x="269" y="572" width="6" height="18" fill="#008000"/>
<rect x="276.5" y="576.5" width="5" height="13" fill="none" stroke="#ff0000"/>
<rect x="283" y="576" width="6" height="14" fill="#008000"/>
<rect x="290" y="577" width="6" height="13" fill="#008000"/>
<rect x="297" y="576" width="6" height="14" fill="#008000"/>
<rect x="304" y="579" width="6" height="11" fill="#008000"/>
<rect x="311" y="579" width="6" height="11" fill="#008000"/>
<rect x="318.5" y="575.5" width="5" height="14" fill="none" stroke="#ff0000"/>
<rect x="325.5" y="567.5" width="5" height="22" fill="none" stroke="#ff0000"/>
<rect x="332.5" y="565.5" width="5" height="24" fill="none" stroke="#ff0000"/>
<rect x="339.5" y="562.5" width="5" height="27" fill="none" stroke="#ff0000"/>
<rect x="346.5" y="564.5" width="5" height="25" fill="none" stroke="#ff0000"/>
<rect x="353.5" y="564.5" width="5" height="25" fill="none" stroke="#ff0000"/>
<rect x="360" y="567" width="6" height="23" fill="#008000"/>
<rect x="367.5" y="571.5" width="5" height="18" fill="none" stroke="#ff0000"/>
<rect x="374" y="565" width="6" height="25" fill="#008000"/>
<rect x="381.5" y="564.5" width="5" height="25" fill="none" stroke="#ff0000"/>
<rect x="388" y="555" width="6" height="35" fill="#008000"/>
<rect x="395.5" y="568.5" width="5" height="21" fill="none" stroke="#ff0000"/>
<rect x="402" y="565" width="6" height="25" fill="#008000"/>
<rect x="409.5" y="571.5" width="5" height="18" fill="none" stroke="#ff0000"/>
<rect x="416" y="572" width="6" height="18" fill="#008000"/>
<rect x="423" y="573" width="6" height="17" fill="#008000"/>
<rect x="430" y="574" width="6" height="16" fill="#008000"/>
<rect x="437.5" y="576.5" width="5" height="13" fill="none" stroke="#ff0000"/>
<rect x="444.5" y="572.5" width="5" height="17" fill="none" stroke="#ff0000"/>
<rect x="451.5" y="559.5" width="5" height="30" fill="none" stroke="#ff0000"/>
<rect x="458.5" y="563.5" width="5" height="26" fill="none" stroke="#ff0000"/>
<rect x="465.5" y="561.5" width="5" height="28" fill="none" stroke="#ff0000"/>
<rect x="472.5" y="559.5" width="5" height="30" fill="none" stroke="#ff0000"/>
<rect x="479.5" y="550.5" width="5" height="39" fill="none" stroke="#ff0000"/>
<rect x="486" y="552" width="6" height="38" fill="#008000"/>
<rect x="493.5" y="553.5" width="5" height="36" fill="none" stroke="#ff0000"/>
<rect x="500.5" y="542.5" width="5" height="47" fill="none" stroke="#ff0000"/>
<rect x="507.5" y="544.5" width="5" height="45" fill="none" stroke="#ff0000"/>
<rect x="514.5" y="535.5" width="5" height="54" fill="none" stroke="#ff0000"/>
<rect x="521.5" y="540.5" width="5" height="49" fill="none" stroke="#ff0000"/>
<rect x="528" y="524" width="6" height="66" fill="#008000"/>
<rect x="535.5" y="546.5" width="5" height="43" fill="none" stroke="#ff0000"/>
<rect x="542.5" y="549.5" width="5" height="40" fill="none" stroke="#ff0000"/>
<rect x="549.5" y="555.5" width="5" height="34" fill="none" stroke="#ff0000"/>
<rect x="556.5" y="556.5" width="5" height="33" fill="none" stroke="#ff0000"/>
<rect x="563.5" y="551.5" width="5" height="38" fill="none" stroke="#ff0000"/>
<rect x="570.5" y="544.5" width="5" height="45" fill="none" stroke="#ff0000"/>
<rect x="577" y="553" width="6" height="37" fill="#008000"/>
<rect x="584.5" y="545.5" width="5" height="44" fill="none" stroke="#ff0000"/>
<rect x="591" y="532" width="6" height="58" fill="#008000"/>
<rect x="598" y="553" width="6" height="37" fill="#008000"/>
<rect x="605" y="558" width="6" height="32" fill="#008000"/>
<rect x="612.5" y="558.5" width="5" height="31" fill="none" stroke="#ff0000"/>
<rect x="619.5" y="551.5" width="5" height="38" fill="none" stroke="#ff0000"/>
<rect x="626" y="546" width="6" height="44" fill="#008000"/>
<rect x="633.5" y="556.5" width="5" height="33" fill="none" stroke="#ff0000"/>
<rect x="640.5" y="555.5" width="5" height="34" fill="none" stroke="#ff0000"/>
<rect x="647.5" y="545.5" width="5" height="44" fill="none" stroke="#ff0000"/>
<rect x="654.5" y="547.5" width="5" height="42" fill="none" stroke="#ff0000"/>
<rect x="661.5" y="556.5" width="5" height="33" fill="none" stroke="#ff0000"/>
<rect x="668" y="558" width="6" height="32" fill="#008000"/>
<rect x="675.5" y="555.5" width="5" height="34" fill="none" stroke="#ff0000"/>
<rect x="682" y="562" width="6" height="28" fill="#008000"/>
<rect x="689.5" y="570.5" width="5" height="19" fill="none" stroke="#ff0000"/>
<rect x="696" y="569" width="6" height="21" fill="#008000"/>
<rect x="703.5" y="566.5" width="5" height="23" fill="none" stroke="#ff0000"/>
<rect x="710.5" y="561.5" width="5" height="28" fill="none" stroke="#ff0000"/>
<rect x="717" y="556" width="6" height="34" fill="#008000"/>
<rect x="724.5" y="559.5" width="5" height="30" fill="none" stroke="#ff0000"/>
<rect x="731.5" y="555.5" width="5" height="34" fill="none" stroke="#ff0000"/>
<rect x="738.5" y="560.5" width="5" height="29" fill="none" stroke="#ff0000"/>
<rect x="745" y="559" width="6" height="31" fill="#008000"/>
<rect x="752.5" y="563.5" width="5" height="26" fill="none" stroke="#ff0000"/>
<rect x="759" y="558" width="6" height="32" fill="#008000"/>
<rect x="766" y="564" width="6" height="26" fill="#008000"/>
<rect x="773.5" y="567.5" width="5" height="22" fill="none" stroke="#ff0000"/>
<rect x="780" y="568" width="6" height="22" fill="#008000"/>
<rect x="787" y="569" width="6" height="21" fill="#008000"/>
<rect x="794.5" y="569.5" width="5" height="20" fill="none" stroke="#ff0000"/>
<rect x="801" y="569" width="6" height="21" fill="#008000"/>
<rect x="808" y="564" width="6" height="26" fill="#008000"/>
<rect x="815" y="569" width="6" height="21" fill="#008000"/>
<rect x="822.5" y="572.5" width="5" height="17" fill="none" stroke="#ff0000"/>
<rect x="829.5" y="573.5" width="5" height="16" fill="none" stroke="#ff0000"/>
<rect x="836.5" y="575.5" width="5" height="14" fill="none" stroke="#ff0000"/>
<rect x="843.5" y="573.5" width="5" height="16" fill="none" stroke="#ff0000"/>
<rect x="850.5" y="568.5" width="5" height="21" fill="none" stroke="#ff0000"/>
<rect x="857.5" y="571.5" width="5" height="18" fill="none" stroke="#ff0000"/>
<rect x="864.5" y="570.5" width="5" height="19" fill="none" stroke="#ff0000"/>
<rect x="871" y="570" width="6" height="20" fill="#008000"/>
<rect x="878.5" y="564.5" width="5" height="25" fill="none" stroke="#ff0000"/>
<rect x="885.5" y="564.5" width="5" height="25" fill="none" stroke="#ff0000"/>
<rect x="892.5" y="560.5" width="5" height="29" fill="none" stroke="#ff0000"/>
<rect x="899" y="557" width="6" height="33" fill="#008000"/>
<rect x="906.5" y="565.5" width="5" height="24" fill="none" stroke="#ff0000"/>
<rect x="913" y="563" width="6" height="27" fill="#008000"/>
<rect x="920" y="566" width="6" height="24" fill="#008000"/>
<rect x="927.5" y="563.5" width="5" height="26" fill="none" stroke="#ff0000"/>
<rect x="934" y="566" width="6" height="24" fill="#008000"/>
<rect x="941.5" y="566.5" width="5" height="23" fill="none" stroke="#ff0000"/>
<rect x="948.5" y="559.5" width="5" height="30" fill="none" stroke="#ff0000"/>
<rect x="955.5" y="562.5" width="5" height="27" fill="none" stroke="#ff0000"/>
<rect x="962.5" y="556.5" width="5" height="33" fill="none" stroke="#ff0000"/>
<rect x="969.5" y="545.5" width="5" height="44" fill="none" stroke="#ff0000"/>
<rect x="976.5" y="543.5" width="5" height="46" fill="none" stroke="#ff0000"/>
<rect x="983.5" y="544.5" width="5" height="45" fill="none" stroke="#ff0000"/>
<rect x="990.5" y="546.5" width="5" height="43" fill="none" stroke="#ff0000"/>
<rect x="997.5" y="544.5" width="5" height="45" fill="none" stroke="#ff0000"/>
<rect x="1004" y="535" width="6" height="55" fill="#008000"/>
</g>
<path d="M633 528 L640 528 L636.5 524 Z" fill="#000"/>
<g font-family="Liberation Mono, monospace" font-size="11.2" fill="#1a1a1a" text-anchor="end" letter-spacing="-0.72">
<text x="48.3" y="520.6">797.7266</text>
<text x="48.3" y="544.9">561453399</text>
<text x="48.3" y="561.1">374302266</text>
<text x="48.3" y="577.2">187151133</text>
</g>
<rect x="0" y="590" width="1221" height="2" fill="#8a8a8a"/>
<text x="-13.5" y="604.5" font-family="Liberation Mono, monospace" font-size="12.5" letter-spacing="-1" fill="#0000ff">MACD</text>
<g font-family="Liberation Sans, sans-serif" font-size="12">
<text x="58" y="604" fill="#000" textLength="49" lengthAdjust="spacingAndGlyphs">DIF=25.42</text>
<text x="128.5" y="604" fill="#0000ff" textLength="54" lengthAdjust="spacingAndGlyphs">DEA=22.87</text>
<text x="199.5" y="604" fill="#ff00ff" textLength="55.5" lengthAdjust="spacingAndGlyphs">MACD=5.11</text>
</g>
<rect x="52" y="607" width="1169" height="1" fill="#a8a8a8"/>
<g stroke="#9a9a9a" stroke-width="1" stroke-dasharray="3 3" shape-rendering="crispEdges">
<line x1="50" y1="612.5" x2="1221" y2="612.5"/>
<line x1="50" y1="630.5" x2="1221" y2="630.5"/>
<line x1="50" y1="648.5" x2="1221" y2="648.5"/>
<line x1="50" y1="666.5" x2="1221" y2="666.5"/>
<line x1="52" y1="659.5" x2="1221" y2="659.5"/>
</g>
<g font-family="Liberation Mono, monospace" font-size="11.2" fill="#1a1a1a" text-anchor="end" letter-spacing="-0.72">
<text x="48.3" y="615.5">143.02</text>
<text x="48.3" y="633.5">88.26</text>
<text x="48.3" y="651.5">33.50</text>
<text x="48.3" y="669.5">-21.25</text>
</g>
<g shape-rendering="crispEdges">
<rect x="55" y="659" width="1" height="7" fill="#008000"/>
<rect x="62" y="659" width="1" height="6" fill="#008000"/>
<rect x="69" y="659" width="1" height="5" fill="#008000"/>
<rect x="76" y="659" width="1" height="4" fill="#008000"/>
<rect x="83" y="659" width="1" height="2" fill="#008000"/>
<rect x="97" y="658" width="1" height="2" fill="#ff0000"/>
<rect x="104" y="656" width="1" height="4" fill="#ff0000"/>
<rect x="111" y="656" width="1" height="4" fill="#ff0000"/>
<rect x="118" y="656" width="1" height="4" fill="#ff0000"/>
<rect x="125" y="657" width="1" height="3" fill="#ff0000"/>
<rect x="132" y="657" width="1" height="3" fill="#ff0000"/>
<rect x="139" y="658" width="1" height="2" fill="#ff0000"/>
<rect x="146" y="659" width="1" height="1" fill="#ff0000"/>
<rect x="160" y="659" width="1" height="1" fill="#008000"/>
<rect x="167" y="659" width="1" height="2" fill="#008000"/>
<rect x="174" y="659" width="1" height="2" fill="#008000"/>
<rect x="181" y="659" width="1" height="2" fill="#008000"/>
<rect x="188" y="659" width="1" height="2" fill="#008000"/>
<rect x="195" y="659" width="1" height="1" fill="#008000"/>
<rect x="202" y="659" width="1" height="1" fill="#008000"/>
<rect x="223" y="659" width="1" height="1" fill="#ff0000"/>
<rect x="230" y="658" width="1" height="2" fill="#ff0000"/>
<rect x="237" y="659" width="1" height="1" fill="#ff0000"/>
<rect x="251" y="659" width="1" height="1" fill="#008000"/>
<rect x="258" y="659" width="1" height="1" fill="#008000"/>
<rect x="265" y="659" width="1" height="2" fill="#008000"/>
<rect x="272" y="659" width="1" height="2" fill="#008000"/>
<rect x="279" y="659" width="1" height="3" fill="#008000"/>
<rect x="286" y="659" width="1" height="4" fill="#008000"/>
<rect x="293" y="659" width="1" height="5" fill="#008000"/>
<rect x="300" y="659" width="1" height="6" fill="#008000"/>
<rect x="307" y="659" width="1" height="8" fill="#008000"/>
<rect x="314" y="659" width="1" height="8" fill="#008000"/>
<rect x="321" y="659" width="1" height="6" fill="#008000"/>
<rect x="328" y="659" width="1" height="2" fill="#008000"/>
<rect x="342" y="658" width="1" height="2" fill="#ff0000"/>
<rect x="349" y="656" width="1" height="4" fill="#ff0000"/>
<rect x="356" y="656" width="1" height="4" fill="#ff0000"/>
<rect x="363" y="655" width="1" height="5" fill="#ff0000"/>
<rect x="370" y="656" width="1" height="4" fill="#ff0000"/>
<rect x="377" y="656" width="1" height="4" fill="#ff0000"/>
<rect x="384" y="655" width="1" height="5" fill="#ff0000"/>
<rect x="391" y="654" width="1" height="6" fill="#ff0000"/>
<rect x="398" y="654" width="1" height="6" fill="#ff0000"/>
<rect x="405" y="654" width="1" height="6" fill="#ff0000"/>
<rect x="412" y="655" width="1" height="5" fill="#ff0000"/>
<rect x="419" y="656" width="1" height="4" fill="#ff0000"/>
<rect x="426" y="658" width="1" height="2" fill="#ff0000"/>
<rect x="440" y="659" width="1" height="1" fill="#008000"/>
<rect x="447" y="659" width="1" height="1" fill="#008000"/>
<rect x="454" y="659" width="1" height="1" fill="#ff0000"/>
<rect x="461" y="656" width="1" height="4" fill="#ff0000"/>
<rect x="468" y="653" width="1" height="7" fill="#ff0000"/>
<rect x="475" y="651" width="1" height="9" fill="#ff0000"/>
<rect x="482" y="648" width="1" height="12" fill="#ff0000"/>
<rect x="489" y="648" width="1" height="12" fill="#ff0000"/>
<rect x="496" y="645" width="1" height="15" fill="#ff0000"/>
<rect x="503" y="643" width="1" height="17" fill="#ff0000"/>
<rect x="510" y="638" width="1" height="22" fill="#ff0000"/>
<rect x="517" y="635" width="1" height="25" fill="#ff0000"/>
<rect x="524" y="632" width="1" height="28" fill="#ff0000"/>
<rect x="531" y="639" width="1" height="21" fill="#ff0000"/>
<rect x="538" y="641" width="1" height="19" fill="#ff0000"/>
<rect x="545" y="645" width="1" height="15" fill="#ff0000"/>
<rect x="552" y="648" width="1" height="12" fill="#ff0000"/>
<rect x="559" y="651" width="1" height="9" fill="#ff0000"/>
<rect x="566" y="651" width="1" height="9" fill="#ff0000"/>
<rect x="573" y="650" width="1" height="10" fill="#ff0000"/>
<rect x="580" y="652" width="1" height="8" fill="#ff0000"/>
<rect x="587" y="651" width="1" height="9" fill="#ff0000"/>
<rect x="594" y="652" width="1" height="8" fill="#ff0000"/>
<rect x="601" y="658" width="1" height="2" fill="#ff0000"/>
<rect x="608" y="659" width="1" height="4" fill="#008000"/>
<rect x="615" y="659" width="1" height="5" fill="#008000"/>
<rect x="622" y="659" width="1" height="2" fill="#008000"/>
<rect x="629" y="659" width="1" height="1" fill="#008000"/>
<rect x="636" y="659" width="1" height="1" fill="#008000"/>
<rect x="643" y="659" width="1" height="1" fill="#ff0000"/>
<rect x="650" y="653" width="1" height="7" fill="#ff0000"/>
<rect x="657" y="651" width="1" height="9" fill="#ff0000"/>
<rect x="664" y="650" width="1" height="10" fill="#ff0000"/>
<rect x="671" y="654" width="1" height="6" fill="#ff0000"/>
<rect x="678" y="658" width="1" height="2" fill="#ff0000"/>
<rect x="685" y="659" width="1" height="2" fill="#008000"/>
<rect x="692" y="659" width="1" height="8" fill="#008000"/>
<rect x="699" y="659" width="1" height="12" fill="#008000"/>
<rect x="706" y="659" width="1" height="8" fill="#008000"/>
<rect x="713" y="659" width="1" height="6" fill="#008000"/>
<rect x="720" y="659" width="1" height="16" fill="#008000"/>
<rect x="727" y="659" width="1" height="16" fill="#008000"/>
<rect x="734" y="659" width="1" height="16" fill="#008000"/>
<rect x="741" y="659" width="1" height="10" fill="#008000"/>
<rect x="748" y="659" width="1" height="8" fill="#008000"/>
<rect x="755" y="659" width="1" height="6" fill="#008000"/>
<rect x="762" y="659" width="1" height="6" fill="#008000"/>
<rect x="769" y="659" width="1" height="8" fill="#008000"/>
<rect x="776" y="659" width="1" height="11" fill="#008000"/>
<rect x="783" y="659" width="1" height="16" fill="#008000"/>
<rect x="790" y="659" width="1" height="16" fill="#008000"/>
<rect x="797" y="659" width="1" height="16" fill="#008000"/>
<rect x="804" y="659" width="1" height="16" fill="#008000"/>
<rect x="811" y="659" width="1" height="16" fill="#008000"/>
<rect x="818" y="659" width="1" height="16" fill="#008000"/>
<rect x="825" y="659" width="1" height="16" fill="#008000"/>
<rect x="832" y="659" width="1" height="16" fill="#008000"/>
<rect x="839" y="659" width="1" height="16" fill="#008000"/>
<rect x="846" y="659" width="1" height="14" fill="#008000"/>
<rect x="853" y="659" width="1" height="10" fill="#008000"/>
<rect x="860" y="659" width="1" height="6" fill="#008000"/>
<rect x="867" y="659" width="1" height="2" fill="#008000"/>
<rect x="874" y="659" width="1" height="1" fill="#ff0000"/>
<rect x="881" y="656" width="1" height="4" fill="#ff0000"/>
<rect x="888" y="654" width="1" height="6" fill="#ff0000"/>
<rect x="895" y="651" width="1" height="9" fill="#ff0000"/>
<rect x="902" y="653" width="1" height="7" fill="#ff0000"/>
<rect x="909" y="656" width="1" height="4" fill="#ff0000"/>
<rect x="916" y="657" width="1" height="3" fill="#ff0000"/>
<rect x="923" y="659" width="1" height="1" fill="#ff0000"/>
<rect x="930" y="658" width="1" height="2" fill="#ff0000"/>
<rect x="937" y="658" width="1" height="2" fill="#ff0000"/>
<rect x="944" y="658" width="1" height="2" fill="#ff0000"/>
<rect x="951" y="656" width="1" height="4" fill="#ff0000"/>
<rect x="958" y="654" width="1" height="6" fill="#ff0000"/>
<rect x="965" y="650" width="1" height="10" fill="#ff0000"/>
<rect x="972" y="646" width="1" height="14" fill="#ff0000"/>
<rect x="979" y="641" width="1" height="19" fill="#ff0000"/>
<rect x="986" y="640" width="1" height="20" fill="#ff0000"/>
<rect x="993" y="638" width="1" height="22" fill="#ff0000"/>
<rect x="1000" y="636" width="1" height="24" fill="#ff0000"/>
<rect x="1007" y="636" width="1" height="24" fill="#ff0000"/>
<rect x="1014" y="638" width="1" height="22" fill="#ff0000"/>
<rect x="1021" y="641" width="1" height="19" fill="#ff0000"/>
<rect x="1028" y="644" width="1" height="16" fill="#ff0000"/>
<rect x="1035" y="647" width="1" height="13" fill="#ff0000"/>
<rect x="1042" y="651" width="1" height="9" fill="#ff0000"/>
<rect x="1049" y="654" width="1" height="6" fill="#ff0000"/>
<rect x="1056" y="657" width="1" height="3" fill="#ff0000"/>
<rect x="1070" y="659" width="1" height="2" fill="#008000"/>
<rect x="1077" y="659" width="1" height="4" fill="#008000"/>
<rect x="1084" y="659" width="1" height="6" fill="#008000"/>
<rect x="1091" y="659" width="1" height="7" fill="#008000"/>
<rect x="1098" y="659" width="1" height="8" fill="#008000"/>
<rect x="1105" y="659" width="1" height="8" fill="#008000"/>
<rect x="1112" y="659" width="1" height="9" fill="#008000"/>
<rect x="1119" y="659" width="1" height="10" fill="#008000"/>
<rect x="1126" y="659" width="1" height="10" fill="#008000"/>
<rect x="1133" y="659" width="1" height="10" fill="#008000"/>
<rect x="1140" y="659" width="1" height="10" fill="#008000"/>
<rect x="1147" y="659" width="1" height="10" fill="#008000"/>
<rect x="1154" y="659" width="1" height="10" fill="#008000"/>
<rect x="1161" y="659" width="1" height="10" fill="#008000"/>
<rect x="1168" y="659" width="1" height="10" fill="#008000"/>
<rect x="1175" y="659" width="1" height="9" fill="#008000"/>
<rect x="1182" y="659" width="1" height="8" fill="#008000"/>
<rect x="1189" y="659" width="1" height="8" fill="#008000"/>
<rect x="1196" y="659" width="1" height="8" fill="#008000"/>
<rect x="1203" y="659" width="1" height="7" fill="#008000"/>
<rect x="1210" y="659" width="1" height="7" fill="#008000"/>
<rect x="1217" y="659" width="1" height="7" fill="#008000"/>
</g>
<g fill="none" stroke-width="1" shape-rendering="crispEdges">
<polyline stroke="#000" points="55,650.3 62,652.5 69,652.7 76,652.5 83,652 90,651.1 97,649.9 104,648.4 111,647 118,646.8 125,646.8 132,646.8 139,646.9 146,647.4 153,648.1 160,648.7 167,649.5 174,650.1 181,650.3 188,650.1 195,649.9 202,649.7 209,649.4 216,649.1 223,649 230,649 237,649.1 244,649.3 251,649.5 258,650 265,650.7 272,651.6 279,652.6 286,653.9 293,655.2 300,656.5 307,657.7 314,658.5 321,658.2 328,657.4 335,655.9 342,654.3 349,652.6 356,651.3 363,650.6 370,650.1 377,649.5 384,648.6 391,647.5 398,646.7 405,646.5 412,646.5 419,646.5 426,647.6 433,648.3 440,648.3 447,648.3 454,647.9 461,646 468,643.9 475,641.7 482,639.3 489,636.9 496,634.3 503,631.3 510,626.8 517,621.1 524,615.9 531,616.7 538,615 545,615.1 552,615.8 559,615.4 566,614.6 573,612.9 580,611.7 587,611 594,610.8 601,612.3 608,615.9 615,617.8 622,617.1 629,616.1 636,615.5 643,614.7 650,612.2 657,609.7 664,607.9 671,608.5 678,610.9 685,614.6 692,618.1 699,620.3 706,620 713,619.8 720,626.5 727,630.7 734,630.6 741,630.3 748,630.3 755,630.3 762,630.3 769,630.9 776,634.3 783,638.4 790,643.8 797,647 804,649.4 811,653.1 818,657.7 825,660.3 832,660.9 839,661.3 846,661.5 853,660.6 860,659.5 867,658.6 874,657.5 881,655 888,652.6 895,651.3 902,651.3 909,651.3 916,651.7 923,652.2 930,652 937,651.6 944,650.8 951,649.3 958,647.1 965,643.9 972,639.8 979,635.9 986,632.2 993,628.7 1000,624.9 1007,621.6 1014,619.7 1021,618.6 1028,617.9 1035,618.2 1042,618.9 1049,619.8 1056,620.9 1063,622.3 1070,623.9 1077,625.5 1084,627.1 1091,628.8 1098,630.5 1105,632.3 1112,633.9 1119,635.5 1126,636.9 1133,638.3 1140,639.6 1147,640.9 1154,642.2 1161,643.5 1168,644.8 1175,646.1 1182,647.1 1189,648 1196,648.8 1203,649.6 1210,650.1 1217,650.6"/>
<polyline stroke="#0000ff" points="55,648.8 62,650 69,650.7 76,651 83,650.7 90,650.1 97,649.6 104,649.1 111,648.7 118,648.3 125,648 132,647.8 139,647.8 146,647.8 153,647.8 160,647.9 167,648.2 174,648.7 181,649 188,649.2 195,649.4 202,649.5 209,649.5 216,649.5 223,649.5 230,649.4 237,649.1 244,648.9 251,648.8 258,648.9 265,649.2 272,649.6 279,650.1 286,650.8 293,651.8 300,652.8 307,654 314,655.1 321,656 328,656.2 335,655.9 342,655.4 349,654.2 356,653.1 363,652.4 370,651.7 377,651 384,650.4 391,649.8 398,649.2 405,648.8 412,648.5 419,648.3 426,648.3 433,648.4 440,648.4 447,648.5 454,648.3 461,647.5 468,646.6 475,645.4 482,643.9 489,642.4 496,640.6 503,638.5 510,635.7 517,632.3 524,628.9 531,625.9 538,623.7 545,622.1 552,620.9 559,619.8 566,618.8 573,617.7 580,616.6 587,615.3 594,614.8 601,614.8 608,614.8 615,615.1 622,615.7 629,616 636,615.7 643,615.2 650,614.1 657,613 664,612.1 671,611.4 678,611.4 685,612.4 692,613.3 699,614.2 706,615.3 713,616.6 720,618.9 727,621.3 734,623.1 741,624.7 748,625.6 755,626.1 762,626.6 769,627.7 776,629.6 783,631.7 790,634.1 797,636.7 804,639.4 811,642.1 818,645 825,647.8 832,650.6 839,653.2 846,655.3 853,656.8 860,657.1 867,657.2 874,657.3 881,656.6 888,655 895,653.5 902,653.4 909,653.3 916,653.2 923,652.9 930,652.6 937,652.1 944,651.5 951,650.9 958,650.2 965,649.2 972,647.5 979,645.3 986,641.7 993,638 1000,634.9 1007,632.2 1014,630 1021,628.2 1028,626.4 1035,624.7 1042,623.4 1049,622.6 1056,622.5 1063,622.7 1070,623.1 1077,623.7 1084,624.4 1091,625.3 1098,626.4 1105,627.6 1112,629 1119,630.5 1126,631.8 1133,633.2 1140,634.5 1147,635.8 1154,637.1 1161,638.3 1168,639.6 1175,640.8 1182,642 1189,643.1 1196,644.3 1203,645.4 1210,646.5 1217,647.6 1221,648.3"/>
</g>
<defs>
<radialGradient id="ring" cx="0.5" cy="0.5" r="0.5"><stop offset="0.84" stop-color="#ffffff"/><stop offset="0.93" stop-color="#f2f2f2"/><stop offset="0.965" stop-color="#d4d4d4"/><stop offset="1" stop-color="#b0b0b0" stop-opacity="0.35"/></radialGradient>
<linearGradient id="gtop" x1="0" y1="0" x2="0" y2="1"><stop offset="0" stop-color="#1c6e44"/><stop offset="1" stop-color="#2f8656"/></linearGradient>
<clipPath id="bc"><circle cx="1213" cy="622.5" r="21.5"/></clipPath>
</defs>
<circle cx="1213" cy="622.5" r="25.2" fill="url(#ring)"/>
<circle cx="1213" cy="622.5" r="21.5" fill="#4dbb60"/>
<rect x="1185" y="598" width="40" height="14.7" fill="url(#gtop)" clip-path="url(#bc)"/>
<ellipse cx="1213" cy="606" rx="5" ry="1.6" fill="#fff" opacity="0.75"/>
<text x="1197.5" y="627.6" font-family="Liberation Sans, sans-serif" font-size="13.5" fill="#fff">71%</text>

</svg>
</body></html>
